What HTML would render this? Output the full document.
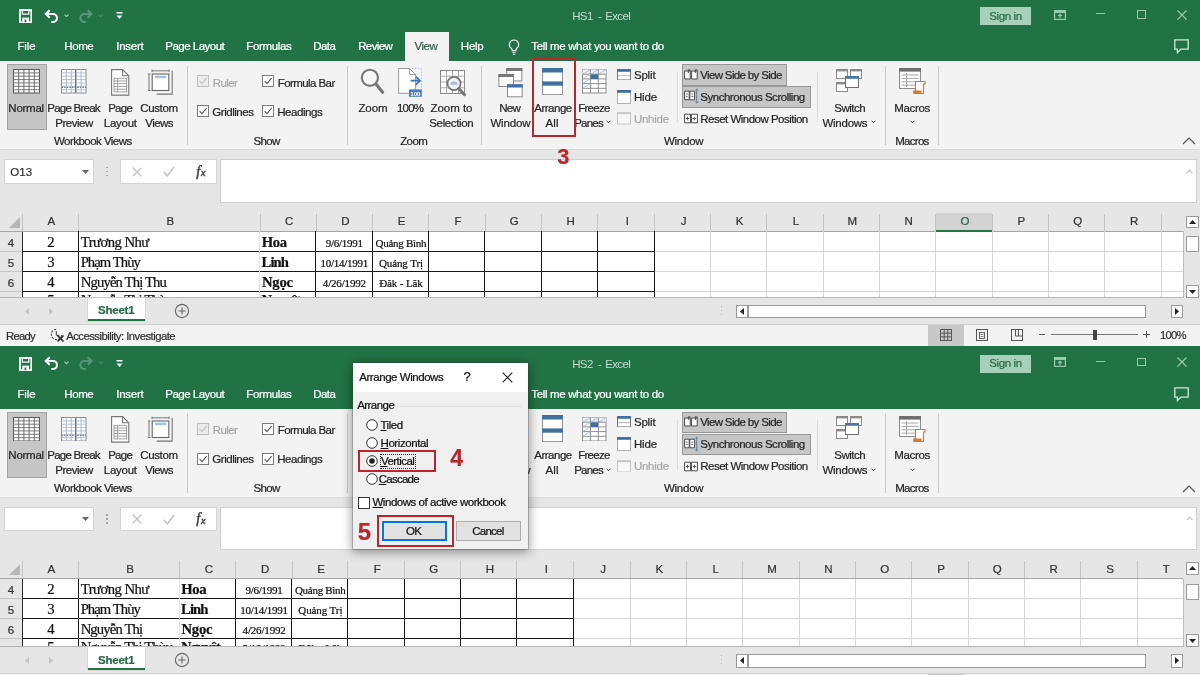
<!DOCTYPE html>
<html lang="en"><head><meta charset="utf-8"><title>Arrange Windows - Excel</title>
<style>
html,body{margin:0;padding:0;}
body{width:1200px;height:675px;overflow:hidden;position:relative;background:#e6e6e6;font-family:"Liberation Sans",sans-serif;}
.w{position:absolute;left:0;width:1200px;overflow:hidden;will-change:transform;}
.t{position:absolute;white-space:pre;-webkit-text-stroke:0.22px currentColor;}
.b{position:absolute;display:block;}
.d{position:absolute;left:0;top:0;width:1200px;height:675px;will-change:transform;}

</style></head>
<body>
<div class="w" style="top:0;height:345.5px;background:#e6e6e6"><div class="b" style="left:0px;top:0px;width:1200px;height:61px;background:#217346;"></div><svg class="b" style="left:19px;top:9px;" width="13.4" height="14.2" viewBox="0 0 13.4 14.2"><path d="M1 1h11.3v12.1h-11.3z" fill="none" stroke="#f4faf6" stroke-width="1.9"/><path d="M3.4 1.5v3.6h6.4v-3.6" fill="none" stroke="#f4faf6" stroke-width="1.3"/><rect x="3.2" y="8.6" width="6.9" height="5" fill="#f4faf6"/><rect x="5.6" y="10.6" width="1.7" height="2.6" fill="#217346"/></svg><svg class="b" style="left:44px;top:8.5px;" width="14.4" height="14.4" viewBox="0 0 14.4 14.4"><g><path d="M2 5H9a4 4 0 0 1 0 8H7.3" fill="none" stroke="#fff" stroke-width="2.1"/><path d="M5.7 1.2L1.8 5l3.9 3.8" fill="none" stroke="#fff" stroke-width="2.1" stroke-linejoin="miter"/></g></svg><svg class="b" style="left:63.7px;top:13.8px;" width="5" height="3.5" viewBox="0 0 5 3.5"><path d="M0.5 0.7L2.5 2.7L4.5 0.7" fill="none" stroke="#9cc7ae" stroke-width="1.2"/></svg><svg class="b" style="left:78.6px;top:8.5px;" width="14.4" height="14.4" viewBox="0 0 14.4 14.4"><g transform="translate(14.4,0) scale(-1,1)"><path d="M2 5H9a4 4 0 0 1 0 8H7.3" fill="none" stroke="#57987a" stroke-width="2.1"/><path d="M5.7 1.2L1.8 5l3.9 3.8" fill="none" stroke="#57987a" stroke-width="2.1" stroke-linejoin="miter"/></g></svg><svg class="b" style="left:97.7px;top:13.8px;" width="5" height="3.5" viewBox="0 0 5 3.5"><path d="M0.5 0.7L2.5 2.7L4.5 0.7" fill="none" stroke="#4c8f6d" stroke-width="1.2"/></svg><svg class="b" style="left:115.5px;top:12px;" width="7" height="8" viewBox="0 0 7 8"><rect x="0.5" y="0" width="6" height="1.5" fill="#fff"/><path d="M0.5 3.5h6L3.5 7z" fill="#fff"/></svg><span class="t" style='left:572.19px;top:8.40px;font-size:11.5px;line-height:16px;color:#c3dbcd;letter-spacing:-0.625px;-webkit-text-stroke:0;'>HS1</span><span class="t" style='left:598.00px;top:8.40px;font-size:11.5px;line-height:16px;color:#c3dbcd;-webkit-text-stroke:0;'>-</span><span class="t" style='left:605.19px;top:8.40px;font-size:11.5px;line-height:16px;color:#c3dbcd;letter-spacing:-0.625px;-webkit-text-stroke:0;'>Excel</span><div class="b" style="left:980px;top:7px;width:51px;height:18px;background:#a6d0b8;"></div><span class="t" style='left:989.31px;top:7.90px;font-size:11.5px;line-height:16px;color:#2a6a47;letter-spacing:-0.382px;'>Sign in</span><svg class="b" style="left:1053.5px;top:9.5px;" width="12" height="10" viewBox="0 0 12 10"><rect x="0.6" y="0.6" width="10.8" height="8.8" fill="none" stroke="#96caad" stroke-width="1.2"/><rect x="0.6" y="0.6" width="10.8" height="2.4" fill="#96caad"/><path d="M6 8.4V4.4M4.2 6L6 4.2L7.8 6" fill="none" stroke="#96caad" stroke-width="1.1"/></svg><div class="b" style="left:1096px;top:13.3px;width:9px;height:1.1999999999999993px;background:#96caad;"></div><div class="b" style="left:1137px;top:10px;width:8.5px;height:8.8px;border:1.2px solid #96caad;box-sizing:border-box;"></div><svg class="b" style="left:1177px;top:9.5px;" width="10" height="10" viewBox="0 0 10 10"><path d="M0.5 0.5l9 9M9.5 0.5l-9 9" stroke="#96caad" stroke-width="1.2"/></svg><span class="t" style='left:17.43px;top:38.40px;font-size:11.5px;line-height:16px;color:#fff;letter-spacing:-0.133px;'>File</span><span class="t" style='left:64.29px;top:38.40px;font-size:11.5px;line-height:16px;color:#fff;letter-spacing:-0.422px;'>Home</span><span class="t" style='left:116.35px;top:38.40px;font-size:11.5px;line-height:16px;color:#fff;letter-spacing:-0.294px;'>Insert</span><span class="t" style='left:165.25px;top:38.40px;font-size:11.5px;line-height:16px;color:#fff;letter-spacing:-0.509px;'>Page Layout</span><span class="t" style='left:246.32px;top:38.40px;font-size:11.5px;line-height:16px;color:#fff;letter-spacing:-0.367px;'>Formulas</span><span class="t" style='left:313.21px;top:38.40px;font-size:11.5px;line-height:16px;color:#fff;letter-spacing:-0.574px;'>Data</span><span class="t" style='left:358.19px;top:38.40px;font-size:11.5px;line-height:16px;color:#fff;letter-spacing:-0.620px;'>Review</span><div class="b" style="left:404.5px;top:32px;width:44.5px;height:29px;background:#f3f3f3;"></div><span class="t" style='left:414.55px;top:38.40px;font-size:11.5px;line-height:16px;color:#35604a;letter-spacing:-0.505px;'>View</span><span class="t" style='left:460.86px;top:38.40px;font-size:11.5px;line-height:16px;color:#fff;letter-spacing:-0.289px;'>Help</span><svg class="b" style="left:508px;top:39px;" width="12" height="17" viewBox="0 0 12 17"><path d="M6 1a4.6 4.6 0 0 1 2.6 8.4c-0.6 0.5-0.8 1.2-0.8 2.1h-3.6c0-0.9-0.2-1.6-0.8-2.1A4.6 4.6 0 0 1 6 1z" fill="none" stroke="#fff" stroke-width="1.2"/><path d="M4.3 13.3h3.4M4.8 15.3h2.4" stroke="#fff" stroke-width="1.1"/></svg><span class="t" style='left:531.33px;top:38.40px;font-size:11.5px;line-height:16px;color:#fff;letter-spacing:-0.349px;'>Tell me what you want to do</span><svg class="b" style="left:1174px;top:39px;" width="16" height="15" viewBox="0 0 16 15"><path d="M0.8 0.8h13.4v9.4h-7.4l-3.4 3.4v-3.4h-2.6z" fill="none" stroke="#cdebd9" stroke-width="1.3"/></svg><div class="b" style="left:0px;top:61px;width:1200px;height:88.5px;background:#f3f3f3;"></div><div class="b" style="left:0px;top:149px;width:1200px;height:1px;background:#dadada;"></div><div class="b" style="left:7px;top:64px;width:39.5px;height:66px;background:#c6c6c6;border:1px solid #a3a3a3;box-sizing:border-box;"></div><svg class="b" style="left:13px;top:69.2px;" width="27" height="24.5" viewBox="0 0 27 24.5"><rect x="0.5" y="0.5" width="26" height="23.5" fill="#fff" stroke="#5c5c5c" stroke-width="1.1"/><path d="M5.7 0.5v23.5" stroke="#6c6c6c" stroke-width="1"/><path d="M10.9 0.5v23.5" stroke="#6c6c6c" stroke-width="1"/><path d="M16.1 0.5v23.5" stroke="#6c6c6c" stroke-width="1"/><path d="M21.3 0.5v23.5" stroke="#6c6c6c" stroke-width="1"/><path d="M0.5 3.9h26" stroke="#6c6c6c" stroke-width="0.9"/><path d="M0.5 7.2h26" stroke="#6c6c6c" stroke-width="0.9"/><path d="M0.5 10.6h26" stroke="#6c6c6c" stroke-width="0.9"/><path d="M0.5 13.9h26" stroke="#6c6c6c" stroke-width="0.9"/><path d="M0.5 17.3h26" stroke="#6c6c6c" stroke-width="0.9"/><path d="M0.5 20.7h26" stroke="#6c6c6c" stroke-width="0.9"/></svg><svg class="b" style="left:61.3px;top:69.2px;" width="25.5" height="24.5" viewBox="0 0 25.5 24.5"><rect x="0.5" y="0.5" width="24.5" height="23.5" fill="#fff" stroke="#8a8a8a"/><path d="M5.4 0.5v23.5" stroke="#aebccd" stroke-width="1"/><path d="M10.3 0.5v23.5" stroke="#aebccd" stroke-width="1"/><path d="M15.2 0.5v23.5" stroke="#aebccd" stroke-width="1"/><path d="M20.1 0.5v23.5" stroke="#aebccd" stroke-width="1"/><path d="M0.5 3.9h24.5" stroke="#aebccd" stroke-width="0.9"/><path d="M0.5 7.2h24.5" stroke="#aebccd" stroke-width="0.9"/><path d="M0.5 10.6h24.5" stroke="#aebccd" stroke-width="0.9"/><path d="M0.5 13.9h24.5" stroke="#aebccd" stroke-width="0.9"/><path d="M0.5 17.3h24.5" stroke="#aebccd" stroke-width="0.9"/><path d="M0.5 20.7h24.5" stroke="#aebccd" stroke-width="0.9"/><path d="M14.6 0.5v23.5" stroke="#777" stroke-width="1.2"/><path d="M0.5 18.3h24.5" stroke="#666" stroke-width="1" stroke-dasharray="1.6 1"/></svg><svg class="b" style="left:111.2px;top:68.5px;" width="18.5" height="27" viewBox="0 0 18.5 27"><path d="M0.6 0.6h11l6.2 6.2v19.3h-17.2z" fill="#fff" stroke="#777" stroke-width="1.1"/><path d="M11.6 0.6v6.2h6.2" fill="none" stroke="#777" stroke-width="1.1"/><rect x="3" y="9.3" width="12.6" height="13.6" fill="#fff" stroke="#9a9a9a" stroke-width="0.9"/><path d="M3 12.0h12.6" stroke="#9a9a9a" stroke-width="0.9"/><path d="M3 14.7h12.6" stroke="#9a9a9a" stroke-width="0.9"/><path d="M3 17.5h12.6" stroke="#9a9a9a" stroke-width="0.9"/><path d="M3 20.2h12.6" stroke="#9a9a9a" stroke-width="0.9"/><path d="M6.6 9.3v13.6" stroke="#9a9a9a" stroke-width="0.9"/></svg><svg class="b" style="left:147.5px;top:68.5px;" width="26" height="27" viewBox="0 0 26 27"><path d="M4 1.8h17M4 0.5v2.6M21 0.5v2.6" stroke="#777" stroke-width="1" fill="none"/><path d="M1 5v16.5M-0.2 5h2.6M-0.2 21.5h2.6" stroke="#777" stroke-width="1" fill="none"/><path d="M24.2 1.8v23.3h-15.5" stroke="#777" stroke-width="1.1" fill="none"/><rect x="4.2" y="5" width="16.6" height="16.5" fill="#fff" stroke="#666" stroke-width="1.1"/><rect x="7" y="6.6" width="11.2" height="2.6" fill="#a9c0e0"/></svg><span class="t" style='left:8.37px;top:99.50px;font-size:11.5px;line-height:16px;color:#262626;letter-spacing:-0.260px;'>Normal</span><span class="t" style='left:47.27px;top:99.50px;font-size:11.5px;line-height:16px;color:#262626;letter-spacing:-0.750px;'>Page Break</span><span class="t" style='left:55.26px;top:114.70px;font-size:11.5px;line-height:16px;color:#262626;letter-spacing:-0.487px;'>Preview</span><span class="t" style='left:108.14px;top:99.50px;font-size:11.5px;line-height:16px;color:#262626;letter-spacing:-0.715px;'>Page</span><span class="t" style='left:103.86px;top:114.70px;font-size:11.5px;line-height:16px;color:#262626;letter-spacing:-0.289px;'>Layout</span><span class="t" style='left:140.31px;top:99.50px;font-size:11.5px;line-height:16px;color:#262626;letter-spacing:-0.387px;'>Custom</span><span class="t" style='left:145.23px;top:114.70px;font-size:11.5px;line-height:16px;color:#262626;letter-spacing:-0.534px;'>Views</span><span class="t" style='left:53.93px;top:132.70px;font-size:11.5px;line-height:16px;color:#262626;letter-spacing:-0.531px;'>Workbook Views</span><div class="b" style="left:186.5px;top:66px;width:1.0px;height:79px;background:#c8c8c8;"></div><svg class="b" style="left:197px;top:75.4px;" width="12" height="12" viewBox="0 0 12 12"><rect x="0.5" y="0.5" width="11" height="11" fill="#ececec" stroke="#bdbdbd"/><path d="M2.6 6.2l2.4 2.5l4.6-5.6" fill="none" stroke="#c2c2c2" stroke-width="1.1"/></svg><span class="t" style='left:212.70px;top:74.90px;font-size:11.5px;line-height:16px;color:#a8a8a8;letter-spacing:-0.597px;'>Ruler</span><svg class="b" style="left:197px;top:105px;" width="12" height="12" viewBox="0 0 12 12"><rect x="0.5" y="0.5" width="11" height="11" fill="#fff" stroke="#7d7d7d"/><path d="M2.6 6.2l2.4 2.5l4.6-5.6" fill="none" stroke="#5a5a5a" stroke-width="1.1"/></svg><span class="t" style='left:212.27px;top:103.70px;font-size:11.5px;line-height:16px;color:#262626;letter-spacing:-0.455px;'>Gridlines</span><svg class="b" style="left:262px;top:75.4px;" width="12" height="12" viewBox="0 0 12 12"><rect x="0.5" y="0.5" width="11" height="11" fill="#fff" stroke="#7d7d7d"/><path d="M2.6 6.2l2.4 2.5l4.6-5.6" fill="none" stroke="#5a5a5a" stroke-width="1.1"/></svg><span class="t" style='left:277.71px;top:74.90px;font-size:11.5px;line-height:16px;color:#262626;letter-spacing:-0.571px;'>Formula Bar</span><svg class="b" style="left:262px;top:105px;" width="12" height="12" viewBox="0 0 12 12"><rect x="0.5" y="0.5" width="11" height="11" fill="#fff" stroke="#7d7d7d"/><path d="M2.6 6.2l2.4 2.5l4.6-5.6" fill="none" stroke="#5a5a5a" stroke-width="1.1"/></svg><span class="t" style='left:277.28px;top:103.70px;font-size:11.5px;line-height:16px;color:#262626;letter-spacing:-0.449px;'>Headings</span><span class="t" style='left:253.58px;top:132.70px;font-size:11.5px;line-height:16px;color:#262626;letter-spacing:-0.645px;'>Show</span><div class="b" style="left:346.7px;top:66px;width:1.0px;height:79px;background:#c8c8c8;"></div><svg class="b" style="left:360px;top:68px;" width="26" height="27" viewBox="0 0 26 27"><circle cx="9.9" cy="9.8" r="8.1" fill="#f6f6f6" stroke="#777" stroke-width="2.1"/><path d="M16 16l6.6 8.2" stroke="#777" stroke-width="3.2" stroke-linecap="round"/></svg><span class="t" style='left:358.45px;top:99.70px;font-size:11.5px;line-height:16px;color:#262626;letter-spacing:-0.102px;'>Zoom</span><svg class="b" style="left:398px;top:68px;" width="25" height="29" viewBox="0 0 25 29"><path d="M0.6 0.5h11l6 6v18.8h-17z" fill="#fff" stroke="#9a9a9a"/><path d="M11.6 0.5v6h6" fill="none" stroke="#9a9a9a"/><path d="M23.4 0.5v20" stroke="#b9c6d8" stroke-width="1.1" stroke-dasharray="1.5 1.5"/><path d="M14 0.5h9" stroke="#b9c6d8" stroke-width="1" stroke-dasharray="1.5 1.5"/><path d="M12.6 12.7h9.4M17.8 8.6l4.2 4.1l-4.2 4.1" fill="none" stroke="#3f74b5" stroke-width="1.7"/><rect x="11" y="21.4" width="12.8" height="7.4" fill="#4a7dbd"/><text x="17.4" y="27.6" font-size="6.2" font-family="Liberation Sans, sans-serif" font-weight="700" fill="#fff" text-anchor="middle">100</text></svg><span class="t" style='left:396.91px;top:99.70px;font-size:11.5px;line-height:16px;color:#262626;letter-spacing:-0.750px;'>100%</span><svg class="b" style="left:439.5px;top:69.5px;" width="28" height="27" viewBox="0 0 28 27"><rect x="0.5" y="0.5" width="24" height="23" fill="#fff" stroke="#8a8a8a"/><path d="M6.5 0.5v23" stroke="#a8a8a8"/><path d="M12.5 0.5v23" stroke="#a8a8a8"/><path d="M18.5 0.5v23" stroke="#a8a8a8"/><path d="M0.5 6.2h24" stroke="#a8a8a8"/><path d="M0.5 12.0h24" stroke="#a8a8a8"/><path d="M0.5 17.8h24" stroke="#a8a8a8"/><circle cx="14" cy="13.5" r="6.6" fill="#eef2f6" stroke="#777" stroke-width="1.8"/><path d="M10.3 14.8a3.7 3.4 0 0 1 7.4 0z" fill="#a9b9c9"/><path d="M19 18.7l5.6 6" stroke="#777" stroke-width="3" stroke-linecap="round"/></svg><span class="t" style='left:430.49px;top:99.70px;font-size:11.5px;line-height:16px;color:#262626;letter-spacing:-0.027px;'>Zoom to</span><span class="t" style='left:429.32px;top:114.70px;font-size:11.5px;line-height:16px;color:#262626;letter-spacing:-0.368px;'>Selection</span><span class="t" style='left:400.20px;top:132.70px;font-size:11.5px;line-height:16px;color:#262626;letter-spacing:-0.602px;'>Zoom</span><div class="b" style="left:481.2px;top:66px;width:1.0px;height:79px;background:#c8c8c8;"></div><svg class="b" style="left:498px;top:67.5px;" width="25" height="30" viewBox="0 0 25 30"><rect x="8.8" y="0.5" width="15" height="12.4" fill="#fff" stroke="#8a8a8a"/><rect x="8.3" y="0" width="16" height="3" fill="#777"/><rect x="0.9" y="6.5" width="14.6" height="12" fill="#fff" stroke="#8a8a8a"/><rect x="0.4" y="6" width="15.6" height="3" fill="#777"/><rect x="9.5" y="16.8" width="14.7" height="12" fill="#fff" stroke="#8a8a8a"/><rect x="9" y="16.3" width="15.7" height="3.2" fill="#3f6fa8"/></svg><span class="t" style='left:499.16px;top:99.70px;font-size:11.5px;line-height:16px;color:#262626;letter-spacing:-0.672px;'>New</span><span class="t" style='left:490.42px;top:114.70px;font-size:11.5px;line-height:16px;color:#262626;letter-spacing:-0.151px;'>Window</span><svg class="b" style="left:542px;top:67.6px;" width="21.2" height="27.2" viewBox="0 0 21.2 27.2"><rect x="0.6" y="0.5" width="20" height="26.2" fill="#fff" stroke="#8a8a8a"/><rect x="0.1" y="0" width="21" height="4.5" fill="#41709f"/><rect x="0.1" y="13.4" width="21" height="4.3" fill="#41709f"/></svg><span class="t" style='left:534.26px;top:99.70px;font-size:11.5px;line-height:16px;color:#262626;letter-spacing:-0.489px;'>Arrange</span><span class="t" style='left:545.54px;top:114.70px;font-size:11.5px;line-height:16px;color:#262626;letter-spacing:0.073px;'>All</span><svg class="b" style="left:582px;top:69.4px;" width="24.5" height="24.5" viewBox="0 0 24.5 24.5"><rect x="0.5" y="0.5" width="23.5" height="23.5" fill="#fff" stroke="#8a8a8a"/><path d="M0.5 5.6h8M0.5 5.6v-5h23.5v5" fill="#eef2f7" stroke="none"/><path d="M8.4 0.5v23.5" stroke="#8f8f8f"/><path d="M16.3 0.5v23.5" stroke="#8f8f8f"/><path d="M0.5 5.2h23.5" stroke="#8f8f8f"/><path d="M0.5 9.9h23.5" stroke="#8f8f8f"/><path d="M0.5 14.6h23.5" stroke="#8f8f8f"/><path d="M0.5 19.3h23.5" stroke="#8f8f8f"/><rect x="8.6" y="5.4" width="7.4" height="4.6" fill="#41709f"/><path d="M0.8 5l7.4-4.2M0.8 9.7l7.4-4.3M0.8 14.4l7.4-4.3M0.8 19.1l7.4-4.3M8.8 5l7-4.2M16.8 5l7-4.2" stroke="#a9bdd6" stroke-width="0.9"/></svg><span class="t" style='left:578.28px;top:99.70px;font-size:11.5px;line-height:16px;color:#262626;letter-spacing:-0.750px;'>Freeze</span><span class="t" style='left:574.15px;top:114.70px;font-size:11.5px;line-height:16px;color:#262626;letter-spacing:-0.750px;'>Panes</span><svg class="b" style="left:606.3px;top:120.2px;" width="5" height="3.5" viewBox="0 0 5 3.5"><path d="M0.5 0.7L2.5 2.7L4.5 0.7" fill="none" stroke="#444" stroke-width="1"/></svg><svg class="b" style="left:617.2px;top:68.5px;" width="14" height="11.4" viewBox="0 0 14 11.4"><rect x="0.5" y="0.5" width="13" height="10.4" fill="#fff" stroke="#777"/><rect x="0" y="0" width="14" height="2.8" fill="#41709f"/><path d="M1.5 6.7h11" stroke="#666" stroke-dasharray="1 1"/></svg><span class="t" style='left:633.91px;top:66.70px;font-size:11.5px;line-height:16px;color:#262626;letter-spacing:-0.175px;'>Split</span><svg class="b" style="left:617.2px;top:89.5px;" width="14" height="14" viewBox="0 0 14 14"><rect x="0.5" y="0.5" width="13" height="13" fill="#fff" stroke="#666" stroke-dasharray="1 1"/><rect x="0" y="0" width="14" height="2.8" fill="#41709f"/></svg><span class="t" style='left:633.92px;top:88.70px;font-size:11.5px;line-height:16px;color:#262626;letter-spacing:-0.164px;'>Hide</span><svg class="b" style="left:617.2px;top:112px;" width="14" height="12.5" viewBox="0 0 14 12.5"><rect x="0.5" y="0.5" width="13" height="11.5" fill="#f7f7f7" stroke="#c4c4c4"/><rect x="0" y="0" width="14" height="2.2" fill="#c9c9c9"/></svg><span class="t" style='left:633.88px;top:110.70px;font-size:11.5px;line-height:16px;color:#a8a8a8;letter-spacing:-0.242px;'>Unhide</span><div class="b" style="left:677px;top:72px;width:1px;height:50px;background:#dcdcdc;"></div><div class="b" style="left:682px;top:64.2px;width:105.20000000000005px;height:21.599999999999994px;background:#c6c6c6;border:1px solid #989898;box-sizing:border-box;"></div><div class="b" style="left:682px;top:86.2px;width:128.79999999999995px;height:21.599999999999994px;background:#c6c6c6;border:1px solid #989898;box-sizing:border-box;"></div><svg class="b" style="left:684.4px;top:68.6px;" width="16" height="16" viewBox="0 0 16 16"><path d="M0.6 2h5.6v8h-5.6zM7.6 2h5.6v8h-5.6z" fill="#fff" stroke="#4a4a4a" stroke-width="1"/><path d="M4.3 0.6v3.4M11.3 0.6v3.4" stroke="#4a4a4a" stroke-width="1"/><path d="M4.3 0.9h1.9v1.1M11.3 0.9h1.9v1.1" fill="none" stroke="#4a4a4a" stroke-width="0.9"/></svg><span class="t" style='left:700.18px;top:66.70px;font-size:11.5px;line-height:16px;color:#262626;letter-spacing:-0.646px;'>View Side by Side</span><svg class="b" style="left:684.4px;top:88px;" width="16" height="16" viewBox="0 0 16 16"><path d="M0.6 3.2h4.6v8.6h-4.6zM5.8 3.2h4.8v8.6h-4.8z" fill="#fff" stroke="#4a4a4a" stroke-width="1"/><path d="M1.8 6h2M1.8 8.4h2M7.3 6h2M7.3 8.4h2" stroke="#4a4a4a" stroke-width="0.8"/><path d="M12.7 1v14" stroke="#5b7fa8" stroke-width="1"/><path d="M11.3 2.6l1.4-1.8l1.4 1.8M11.3 13.4l1.4 1.8l1.4-1.8" fill="none" stroke="#5b7fa8" stroke-width="0.9"/></svg><span class="t" style='left:700.26px;top:88.70px;font-size:11.5px;line-height:16px;color:#262626;letter-spacing:-0.472px;'>Synchronous Scrolling</span><svg class="b" style="left:684.4px;top:113.2px;" width="16" height="16" viewBox="0 0 16 16"><path d="M0.6 1.2h6v8.6h-6zM7.4 1.2h6v8.6h-6z" fill="#fff" stroke="#4a4a4a" stroke-width="1"/><path d="M1.8 5.5h3.6M8.6 5.5h3.6M3.6 3.7v3.6M10.4 3.7v3.6" fill="none" stroke="#4a4a4a" stroke-width="0.9"/></svg><span class="t" style='left:700.24px;top:110.70px;font-size:11.5px;line-height:16px;color:#262626;letter-spacing:-0.512px;'>Reset Window Position</span><div class="b" style="left:817px;top:72px;width:1px;height:50px;background:#dcdcdc;"></div><svg class="b" style="left:836px;top:68.5px;" width="27" height="24" viewBox="0 0 27 24"><rect x="0.5" y="0.5" width="11" height="9" fill="#fff" stroke="#8a8a8a"/><rect x="0" y="0" width="12" height="2.4" fill="#8a8a8a"/><rect x="14.5" y="0.5" width="11" height="9" fill="#fff" stroke="#8a8a8a"/><rect x="14" y="0" width="12" height="2.4" fill="#8a8a8a"/><rect x="0.5" y="13.5" width="11" height="9" fill="#fff" stroke="#8a8a8a"/><rect x="0" y="13" width="12" height="2.4" fill="#8a8a8a"/><rect x="9.5" y="7.5" width="13" height="11" fill="#fff" stroke="#6f6f6f"/><rect x="9" y="7" width="14" height="2.8" fill="#4a77a8"/></svg><span class="t" style='left:834.26px;top:99.70px;font-size:11.5px;line-height:16px;color:#262626;letter-spacing:-0.479px;'>Switch</span><span class="t" style='left:822.38px;top:114.70px;font-size:11.5px;line-height:16px;color:#262626;letter-spacing:-0.237px;'>Windows</span><svg class="b" style="left:870.5px;top:120.4px;" width="5" height="3.5" viewBox="0 0 5 3.5"><path d="M0.5 0.7L2.5 2.7L4.5 0.7" fill="none" stroke="#444" stroke-width="1"/></svg><span class="t" style='left:663.88px;top:132.70px;font-size:11.5px;line-height:16px;color:#262626;letter-spacing:-0.234px;'>Window</span><div class="b" style="left:885.3px;top:66px;width:1.0px;height:79px;background:#c8c8c8;"></div><svg class="b" style="left:899px;top:68px;" width="28" height="27" viewBox="0 0 28 27"><rect x="0.5" y="0.5" width="21" height="20" fill="#fff" stroke="#8a8a8a"/><rect x="0" y="0" width="22" height="3.6" fill="#6f6f6f"/><path d="M2.5 7.0h17" stroke="#a8a8a8"/><path d="M2.5 10.4h17" stroke="#a8a8a8"/><path d="M2.5 13.8h17" stroke="#a8a8a8"/><path d="M2.5 17.2h17" stroke="#a8a8a8"/><path d="M7.5 5v14" stroke="#a8a8a8"/><path d="M16.5 13.5h9.5v2.5h-1.5v9.5h-9.5v-2.5h1.5z" fill="#fff" stroke="#d9772b" stroke-width="1.2"/><rect x="14.5" y="22.5" width="8" height="3" fill="#d9772b"/></svg><span class="t" style='left:894.32px;top:99.70px;font-size:11.5px;line-height:16px;color:#262626;letter-spacing:-0.367px;'>Macros</span><svg class="b" style="left:909.8px;top:120.4px;" width="5" height="3.5" viewBox="0 0 5 3.5"><path d="M0.5 0.7L2.5 2.7L4.5 0.7" fill="none" stroke="#444" stroke-width="1"/></svg><span class="t" style='left:895.15px;top:132.70px;font-size:11.5px;line-height:16px;color:#262626;letter-spacing:-0.701px;'>Macros</span><div class="b" style="left:938px;top:66px;width:1px;height:79px;background:#c8c8c8;"></div><svg class="b" style="left:1181.5px;top:137px;" width="14" height="8" viewBox="0 0 14 8"><path d="M1 7L7 1L13 7" fill="none" stroke="#555" stroke-width="1.2"/></svg><div class="b" style="left:532px;top:58.4px;width:44.200000000000045px;height:78.4px;border:2.3px solid #b9272d;box-sizing:border-box;"></div><div class="b" style="left:4.2px;top:159px;width:89.6px;height:24.599999999999994px;background:#fff;border:1px solid #d4d4d4;box-sizing:border-box;"></div><span class="t" style='left:10.16px;top:163.70px;font-size:11.5px;line-height:16px;color:#333;letter-spacing:0.117px;'>O13</span><svg class="b" style="left:81.5px;top:169.5px;" width="7" height="4" viewBox="0 0 7 4"><path d="M0 0h7L3.5 4z" fill="#666"/></svg><div class="b" style="left:106.4px;top:166.9px;width:1.5999999999999943px;height:1.5999999999999943px;background:#a6a6a6;"></div><div class="b" style="left:106.4px;top:170.8px;width:1.5999999999999943px;height:1.5999999999999943px;background:#a6a6a6;"></div><div class="b" style="left:106.4px;top:174.70000000000002px;width:1.5999999999999943px;height:1.5999999999999943px;background:#a6a6a6;"></div><div class="b" style="left:120.2px;top:159px;width:96.39999999999999px;height:24.599999999999994px;background:#fff;border:1px solid #d4d4d4;box-sizing:border-box;"></div><svg class="b" style="left:132px;top:166.5px;" width="10" height="10" viewBox="0 0 10 10"><path d="M0.8 0.8l8.4 8.4M9.2 0.8l-8.4 8.4" stroke="#c2c2c2" stroke-width="1.4"/></svg><svg class="b" style="left:163px;top:166px;" width="12" height="11" viewBox="0 0 12 11"><path d="M0.8 6l3.6 3.8L11.2 0.8" fill="none" stroke="#c2c2c2" stroke-width="1.5"/></svg><span class="t" style='left:196.20px;top:160.90px;font-size:14.5px;line-height:20px;color:#3f3f3f;font-family:"Liberation Serif", serif;font-style:italic;-webkit-text-stroke:0.45px currentColor;'>f</span><span class="t" style='left:201.00px;top:166.10px;font-size:10px;line-height:14px;color:#3f3f3f;font-family:"Liberation Serif", serif;font-style:italic;-webkit-text-stroke:0.45px currentColor;'>x</span><div class="b" style="left:220.4px;top:159px;width:976.6px;height:43.599999999999994px;background:#fff;border:1px solid #d0d0d0;box-sizing:border-box;"></div><svg class="b" style="left:1185.5px;top:168.5px;" width="7" height="5" viewBox="0 0 7 5"><path d="M0.5 4.2L3.5 1L6.5 4.2" fill="none" stroke="#c2c2c2" stroke-width="1.1"/></svg><div class="b" style="left:0;top:0;width:1183.5px;height:297.5px;overflow:hidden"><div class="b" style="left:22px;top:231px;width:1161px;height:66.5px;background:#fff;"></div><svg class="b" style="left:8.8px;top:216.8px;" width="11" height="11" viewBox="0 0 11 11"><path d="M11 0v11h-11z" fill="#b7b7b7"/></svg><span class="t" style='left:47.61px;top:213.30px;font-size:11.5px;line-height:16px;color:#333;'>A</span><span class="t" style='left:166.61px;top:213.30px;font-size:11.5px;line-height:16px;color:#333;'>B</span><span class="t" style='left:285.04px;top:213.30px;font-size:11.5px;line-height:16px;color:#333;'>C</span><span class="t" style='left:341.19px;top:213.30px;font-size:11.5px;line-height:16px;color:#333;'>D</span><span class="t" style='left:397.86px;top:213.30px;font-size:11.5px;line-height:16px;color:#333;'>E</span><span class="t" style='left:454.53px;top:213.30px;font-size:11.5px;line-height:16px;color:#333;'>F</span><span class="t" style='left:509.87px;top:213.30px;font-size:11.5px;line-height:16px;color:#333;'>G</span><span class="t" style='left:566.54px;top:213.30px;font-size:11.5px;line-height:16px;color:#333;'>H</span><span class="t" style='left:625.75px;top:213.30px;font-size:11.5px;line-height:16px;color:#333;'>I</span><span class="t" style='left:680.78px;top:213.30px;font-size:11.5px;line-height:16px;color:#333;'>J</span><span class="t" style='left:735.86px;top:213.30px;font-size:11.5px;line-height:16px;color:#333;'>K</span><span class="t" style='left:792.85px;top:213.30px;font-size:11.5px;line-height:16px;color:#333;'>L</span><span class="t" style='left:847.55px;top:213.30px;font-size:11.5px;line-height:16px;color:#333;'>M</span><span class="t" style='left:904.54px;top:213.30px;font-size:11.5px;line-height:16px;color:#333;'>N</span><div class="b" style="left:935.7px;top:212.5px;width:56.299999999999955px;height:18.5px;background:#d3d3d3;"></div><div class="b" style="left:935.7px;top:229.5px;width:56.299999999999955px;height:2.0px;background:#217346;"></div><span class="t" style='left:960.57px;top:213.30px;font-size:11.5px;line-height:16px;color:#35604a;'>O</span><span class="t" style='left:1017.51px;top:213.30px;font-size:11.5px;line-height:16px;color:#333;'>P</span><span class="t" style='left:1073.22px;top:213.30px;font-size:11.5px;line-height:16px;color:#333;'>Q</span><span class="t" style='left:1129.89px;top:213.30px;font-size:11.5px;line-height:16px;color:#333;'>R</span><span class="t" style='left:1186.51px;top:213.30px;font-size:11.5px;line-height:16px;color:#333;'>S</span><div class="b" style="left:21.5px;top:213.5px;width:1.0px;height:17.5px;background:#c4c4c4;"></div><div class="b" style="left:78.0px;top:213.5px;width:1.0px;height:17.5px;background:#c4c4c4;"></div><div class="b" style="left:259.5px;top:213.5px;width:1.0px;height:17.5px;background:#c4c4c4;"></div><div class="b" style="left:315.5px;top:213.5px;width:1.0px;height:17.5px;background:#c4c4c4;"></div><div class="b" style="left:371.8px;top:213.5px;width:1.0px;height:17.5px;background:#c4c4c4;"></div><div class="b" style="left:428.2px;top:213.5px;width:1.0px;height:17.5px;background:#c4c4c4;"></div><div class="b" style="left:484.5px;top:213.5px;width:1.0px;height:17.5px;background:#c4c4c4;"></div><div class="b" style="left:540.8px;top:213.5px;width:1.0px;height:17.5px;background:#c4c4c4;"></div><div class="b" style="left:597.2px;top:213.5px;width:1.0px;height:17.5px;background:#c4c4c4;"></div><div class="b" style="left:654.1px;top:213.5px;width:1.0px;height:17.5px;background:#c4c4c4;"></div><div class="b" style="left:709.8px;top:213.5px;width:1.0px;height:17.5px;background:#c4c4c4;"></div><div class="b" style="left:766.2px;top:213.5px;width:1.0px;height:17.5px;background:#c4c4c4;"></div><div class="b" style="left:822.5px;top:213.5px;width:1.0px;height:17.5px;background:#c4c4c4;"></div><div class="b" style="left:878.8px;top:213.5px;width:1.0px;height:17.5px;background:#c4c4c4;"></div><div class="b" style="left:935.2px;top:213.5px;width:1.0px;height:17.5px;background:#c4c4c4;"></div><div class="b" style="left:991.5px;top:213.5px;width:1.0px;height:17.5px;background:#c4c4c4;"></div><div class="b" style="left:1047.8px;top:213.5px;width:1.0px;height:17.5px;background:#c4c4c4;"></div><div class="b" style="left:1104.2px;top:213.5px;width:1.0px;height:17.5px;background:#c4c4c4;"></div><div class="b" style="left:1160.5px;top:213.5px;width:1.0px;height:17.5px;background:#c4c4c4;"></div><div class="b" style="left:1216.8px;top:213.5px;width:1.0px;height:17.5px;background:#c4c4c4;"></div><div class="b" style="left:0px;top:230.5px;width:1183px;height:1.0px;background:#a6a6a6;z-index:0;"></div><div class="b" style="left:935.7px;top:229.5px;width:56.299999999999955px;height:2.1999999999999886px;background:#217346;"></div><div class="b" style="left:654.6px;top:250.5px;width:528.4px;height:1.0px;background:#d6d6d6;"></div><div class="b" style="left:654.6px;top:270.5px;width:528.4px;height:1.0px;background:#d6d6d6;"></div><div class="b" style="left:654.6px;top:290.5px;width:528.4px;height:1.0px;background:#d6d6d6;"></div><div class="b" style="left:709.8px;top:231px;width:1.0px;height:66.5px;background:#d6d6d6;"></div><div class="b" style="left:766.2px;top:231px;width:1.0px;height:66.5px;background:#d6d6d6;"></div><div class="b" style="left:822.5px;top:231px;width:1.0px;height:66.5px;background:#d6d6d6;"></div><div class="b" style="left:878.8px;top:231px;width:1.0px;height:66.5px;background:#d6d6d6;"></div><div class="b" style="left:935.2px;top:231px;width:1.0px;height:66.5px;background:#d6d6d6;"></div><div class="b" style="left:991.5px;top:231px;width:1.0px;height:66.5px;background:#d6d6d6;"></div><div class="b" style="left:1047.8px;top:231px;width:1.0px;height:66.5px;background:#d6d6d6;"></div><div class="b" style="left:1104.2px;top:231px;width:1.0px;height:66.5px;background:#d6d6d6;"></div><div class="b" style="left:1160.5px;top:231px;width:1.0px;height:66.5px;background:#d6d6d6;"></div><div class="b" style="left:1216.8px;top:231px;width:1.0px;height:66.5px;background:#d6d6d6;"></div><div class="b" style="left:0px;top:250.5px;width:22px;height:1.0px;background:#c4c4c4;"></div><div class="b" style="left:0px;top:270.5px;width:22px;height:1.0px;background:#c4c4c4;"></div><div class="b" style="left:0px;top:290.5px;width:22px;height:1.0px;background:#c4c4c4;"></div><div class="b" style="left:21.8px;top:231.5px;width:1.0999999999999979px;height:66.0px;background:#2a2a2a;"></div><div class="b" style="left:22px;top:250.9px;width:632.6px;height:1.0999999999999943px;background:#161616;"></div><div class="b" style="left:22px;top:270.9px;width:632.6px;height:1.1000000000000227px;background:#161616;"></div><div class="b" style="left:22px;top:290.9px;width:632.6px;height:1.1000000000000227px;background:#161616;"></div><div class="b" style="left:78px;top:231px;width:1.0999999999999943px;height:66.5px;background:#161616;"></div><div class="b" style="left:259px;top:231px;width:1px;height:66.5px;background:#e4e4e4;"></div><div class="b" style="left:315px;top:231px;width:1.1000000000000227px;height:66.5px;background:#161616;"></div><div class="b" style="left:372px;top:231px;width:1.1000000000000227px;height:66.5px;background:#161616;"></div><div class="b" style="left:428px;top:231px;width:1.1000000000000227px;height:66.5px;background:#161616;"></div><div class="b" style="left:484px;top:231px;width:1.1000000000000227px;height:66.5px;background:#161616;"></div><div class="b" style="left:541px;top:231px;width:1.1000000000000227px;height:66.5px;background:#161616;"></div><div class="b" style="left:597px;top:231px;width:1.1000000000000227px;height:66.5px;background:#161616;"></div><div class="b" style="left:654px;top:231px;width:1.1000000000000227px;height:66.5px;background:#161616;"></div><div class="b" style="left:1182.5px;top:231px;width:1.0px;height:66.5px;background:#bdbdbd;"></div><span class="t" style='left:7.75px;top:234.70px;font-size:11.5px;line-height:16px;color:#333;letter-spacing:-0.106px;'>4</span><span class="t" style='left:7.75px;top:254.75px;font-size:11.5px;line-height:16px;color:#333;letter-spacing:-0.106px;'>5</span><span class="t" style='left:7.75px;top:274.80px;font-size:11.5px;line-height:16px;color:#333;letter-spacing:-0.106px;'>6</span><span class="t" style='left:47.34px;top:231.75px;font-size:14.67px;line-height:21px;color:#111;font-family:"Liberation Serif", serif;'>2</span><span class="t" style='left:80.83px;top:231.75px;font-size:14.67px;line-height:21px;color:#111;font-family:"Liberation Serif", serif;letter-spacing:-0.540px;'>Trương Như</span><span class="t" style='left:261.82px;top:231.75px;font-size:14.67px;line-height:21px;color:#111;font-weight:700;font-family:"Liberation Serif", serif;letter-spacing:-0.354px;'>Hoa</span><span class="t" style='left:325.82px;top:235.99px;font-size:11px;line-height:15px;color:#111;font-family:"Liberation Serif", serif;letter-spacing:-0.266px;'>9/6/1991</span><span class="t" style='left:375.56px;top:235.99px;font-size:11px;line-height:15px;color:#111;font-family:"Liberation Serif", serif;letter-spacing:-0.288px;'>Quảng Bình</span><span class="t" style='left:47.34px;top:251.75px;font-size:14.67px;line-height:21px;color:#111;font-family:"Liberation Serif", serif;'>3</span><span class="t" style='left:80.64px;top:251.75px;font-size:14.67px;line-height:21px;color:#111;font-family:"Liberation Serif", serif;letter-spacing:-0.926px;'>Phạm Thùy</span><span class="t" style='left:261.54px;top:251.75px;font-size:14.67px;line-height:21px;color:#111;font-weight:700;font-family:"Liberation Serif", serif;letter-spacing:-0.914px;'>Linh</span><span class="t" style='left:320.57px;top:255.99px;font-size:11px;line-height:15px;color:#111;font-family:"Liberation Serif", serif;letter-spacing:-0.263px;'>10/14/1991</span><span class="t" style='left:378.95px;top:255.99px;font-size:11px;line-height:15px;color:#111;font-family:"Liberation Serif", serif;letter-spacing:-0.104px;'>Quảng Trị</span><span class="t" style='left:47.34px;top:271.75px;font-size:14.67px;line-height:21px;color:#111;font-family:"Liberation Serif", serif;'>4</span><span class="t" style='left:80.68px;top:271.75px;font-size:14.67px;line-height:21px;color:#111;font-family:"Liberation Serif", serif;letter-spacing:-0.841px;'>Nguyễn Thị Thu</span><span class="t" style='left:261.91px;top:271.75px;font-size:14.67px;line-height:21px;color:#111;font-weight:700;font-family:"Liberation Serif", serif;letter-spacing:-0.188px;'>Ngọc</span><span class="t" style='left:322.86px;top:275.99px;font-size:11px;line-height:15px;color:#111;font-family:"Liberation Serif", serif;letter-spacing:-0.181px;'>4/26/1992</span><span class="t" style='left:379.19px;top:275.99px;font-size:11px;line-height:15px;color:#111;font-family:"Liberation Serif", serif;letter-spacing:-0.122px;'>Đăk - Lăk</span><span class="t" style='left:47.34px;top:290.35px;font-size:14.67px;line-height:21px;color:#111;font-family:"Liberation Serif", serif;'>5</span><span class="t" style='left:80.65px;top:290.35px;font-size:14.67px;line-height:21px;color:#111;font-family:"Liberation Serif", serif;letter-spacing:-0.900px;'>Nguyễn Thị Thùy</span><span class="t" style='left:261.52px;top:290.35px;font-size:14.67px;line-height:21px;color:#111;font-weight:700;font-family:"Liberation Serif", serif;letter-spacing:-0.964px;'>Nguyệt</span><span class="t" style='left:322.86px;top:294.59px;font-size:11px;line-height:15px;color:#111;font-family:"Liberation Serif", serif;letter-spacing:-0.181px;'>5/19/1992</span><span class="t" style='left:378.95px;top:294.59px;font-size:11px;line-height:15px;color:#111;font-family:"Liberation Serif", serif;letter-spacing:-0.104px;'>Quảng Trị</span></div><div class="b" style="left:1183.5px;top:212px;width:16.5px;height:86px;background:#e6e6e6;"></div><div class="b" style="left:1186px;top:215.5px;width:12.700000000000045px;height:12.5px;background:#fff;border:1px solid #9b9b9b;box-sizing:border-box;"></div><svg class="b" style="left:1189px;top:219.5px;" width="7" height="4" viewBox="0 0 7 4"><path d="M0 4h7L3.5 0z" fill="#222"/></svg><div class="b" style="left:1186px;top:236.0px;width:12.700000000000045px;height:15.5px;background:#fff;border:1px solid #9b9b9b;box-sizing:border-box;"></div><div class="b" style="left:1186px;top:285.0px;width:12.700000000000045px;height:12.800000000000011px;background:#fff;border:1px solid #9b9b9b;box-sizing:border-box;"></div><svg class="b" style="left:1189px;top:289.5px;" width="7" height="4" viewBox="0 0 7 4"><path d="M0 0h7L3.5 4z" fill="#222"/></svg><div class="b" style="left:0;top:0px;width:1200px;height:0"><div class="b" style="left:0px;top:297.5px;width:1200px;height:26.5px;background:#e6e6e6;"></div><div class="b" style="left:0px;top:297px;width:1183.5px;height:1px;background:#b5b5b5;"></div><svg class="b" style="left:24.5px;top:307.5px;" width="4" height="7" viewBox="0 0 4 7"><path d="M4 0v7L0 3.5z" fill="#c4c4c4"/></svg><svg class="b" style="left:48.5px;top:307.5px;" width="4" height="7" viewBox="0 0 4 7"><path d="M0 0v7L4 3.5z" fill="#c4c4c4"/></svg><div class="b" style="left:88px;top:298px;width:57px;height:22.5px;background:#fff;box-shadow:0 0 0 0.6px #cfcfcf;"></div><div class="b" style="left:88px;top:318.7px;width:57px;height:2.0px;background:#217346;"></div><span class="t" style='left:98.08px;top:302.30px;font-size:11.5px;line-height:16px;color:#2a6a48;font-weight:700;letter-spacing:-0.236px;'>Sheet1</span><svg class="b" style="left:173.5px;top:303px;" width="16" height="16" viewBox="0 0 16 16"><circle cx="8" cy="8" r="6.6" fill="none" stroke="#666" stroke-width="1.1"/><path d="M8 4.5v7M4.5 8h7" stroke="#666" stroke-width="1.1"/></svg><div class="b" style="left:720.5px;top:305.5px;width:1.5px;height:1.5px;background:#b5b5b5;"></div><div class="b" style="left:720.5px;top:309.5px;width:1.5px;height:1.5px;background:#b5b5b5;"></div><div class="b" style="left:720.5px;top:313.5px;width:1.5px;height:1.5px;background:#b5b5b5;"></div><div class="b" style="left:735.5px;top:304.8px;width:12.5px;height:13.399999999999977px;background:#fff;border:1px solid #9b9b9b;box-sizing:border-box;"></div><svg class="b" style="left:740px;top:308px;" width="4" height="7" viewBox="0 0 4 7"><path d="M4 0v7L0 3.5z" fill="#222"/></svg><div class="b" style="left:747.5px;top:304.8px;width:398.5px;height:13.399999999999977px;background:#fff;border:1px solid #9b9b9b;box-sizing:border-box;"></div><div class="b" style="left:1170.7px;top:304.8px;width:12.299999999999955px;height:13.399999999999977px;background:#fff;border:1px solid #9b9b9b;box-sizing:border-box;"></div><svg class="b" style="left:1175.3px;top:308px;" width="4" height="7" viewBox="0 0 4 7"><path d="M0 0v7L4 3.5z" fill="#222"/></svg><div class="b" style="left:0px;top:323.5px;width:1200px;height:1.0px;background:#cfcfcf;"></div></div><div class="b" style="left:0px;top:324.5px;width:1200px;height:21.0px;background:#f3f3f3;"></div><span class="t" style='left:6.02px;top:327.50px;font-size:11.3px;line-height:16px;color:#333;letter-spacing:-0.750px;'>Ready</span><svg class="b" style="left:50px;top:328px;" width="15" height="14" viewBox="0 0 15 14"><path d="M6.2 1.2a5.2 5.2 0 1 0 5.4 6" fill="none" stroke="#444" stroke-width="1.1" stroke-dasharray="2.2 1.3"/><path d="M6.3 3v4.3h3" fill="none" stroke="#444" stroke-width="1"/><path d="M7.5 7.5l6 6M13.5 7.5l-6 6" stroke="#222" stroke-width="1.5"/></svg><span class="t" style='left:66.24px;top:327.50px;font-size:11.3px;line-height:16px;color:#333;letter-spacing:-0.525px;'>Accessibility: Investigate</span><div class="b" style="left:928px;top:325px;width:35.5px;height:20.5px;background:#c8c8c8;"></div><svg class="b" style="left:939.5px;top:329px;" width="12" height="12" viewBox="0 0 12 12"><rect x="0.5" y="0.5" width="11" height="11" fill="none" stroke="#555"/><path d="M4.2 0.5v11M7.8 0.5v11M0.5 4.2h11M0.5 7.8h11" stroke="#555"/></svg><svg class="b" style="left:975.5px;top:329px;" width="12" height="12" viewBox="0 0 12 12"><rect x="0.5" y="0.5" width="11" height="11" fill="none" stroke="#555"/><rect x="3.5" y="3.5" width="5" height="6" fill="none" stroke="#555" stroke-width="0.9"/><path d="M4.5 5.5h3M4.5 7.5h3" stroke="#555" stroke-width="0.7"/></svg><svg class="b" style="left:1010.5px;top:329px;" width="12" height="12" viewBox="0 0 12 12"><rect x="0.5" y="0.5" width="11" height="11" fill="none" stroke="#555"/><path d="M4.5 0.5v6.5h7M7.5 0.5v6.5" fill="none" stroke="#555"/></svg><div class="b" style="left:1039px;top:334.3px;width:6px;height:1.099999999999966px;background:#555;"></div><div class="b" style="left:1051px;top:334.4px;width:87px;height:0.9000000000000341px;background:#777;"></div><div class="b" style="left:1093.2px;top:329.6px;width:3.599999999999909px;height:10.599999999999966px;background:#444;"></div><div class="b" style="left:1143px;top:334.3px;width:7px;height:1.099999999999966px;background:#555;"></div><div class="b" style="left:1146px;top:331.3px;width:1.099999999999909px;height:7.099999999999966px;background:#555;"></div><span class="t" style='left:1160.02px;top:327.10px;font-size:11.3px;line-height:16px;color:#333;letter-spacing:-0.750px;'>100%</span><span class="t" style='left:557.19px;top:141.40px;font-size:21.8px;line-height:31px;color:#b9272d;font-weight:700;'>3</span></div><div class="w" style="top:345.5px;height:329.5px;background:#e6e6e6"><div class="b" style="left:0;top:1.5px;width:1200px;height:345.5px"><div class="b" style="left:0px;top:-1.5px;width:1200px;height:1.5px;background:#217346;"></div><div class="b" style="left:0px;top:0px;width:1200px;height:61px;background:#217346;"></div><svg class="b" style="left:19px;top:9px;" width="13.4" height="14.2" viewBox="0 0 13.4 14.2"><path d="M1 1h11.3v12.1h-11.3z" fill="none" stroke="#f4faf6" stroke-width="1.9"/><path d="M3.4 1.5v3.6h6.4v-3.6" fill="none" stroke="#f4faf6" stroke-width="1.3"/><rect x="3.2" y="8.6" width="6.9" height="5" fill="#f4faf6"/><rect x="5.6" y="10.6" width="1.7" height="2.6" fill="#217346"/></svg><svg class="b" style="left:44px;top:8.5px;" width="14.4" height="14.4" viewBox="0 0 14.4 14.4"><g><path d="M2 5H9a4 4 0 0 1 0 8H7.3" fill="none" stroke="#fff" stroke-width="2.1"/><path d="M5.7 1.2L1.8 5l3.9 3.8" fill="none" stroke="#fff" stroke-width="2.1" stroke-linejoin="miter"/></g></svg><svg class="b" style="left:63.7px;top:13.8px;" width="5" height="3.5" viewBox="0 0 5 3.5"><path d="M0.5 0.7L2.5 2.7L4.5 0.7" fill="none" stroke="#9cc7ae" stroke-width="1.2"/></svg><svg class="b" style="left:78.6px;top:8.5px;" width="14.4" height="14.4" viewBox="0 0 14.4 14.4"><g transform="translate(14.4,0) scale(-1,1)"><path d="M2 5H9a4 4 0 0 1 0 8H7.3" fill="none" stroke="#57987a" stroke-width="2.1"/><path d="M5.7 1.2L1.8 5l3.9 3.8" fill="none" stroke="#57987a" stroke-width="2.1" stroke-linejoin="miter"/></g></svg><svg class="b" style="left:97.7px;top:13.8px;" width="5" height="3.5" viewBox="0 0 5 3.5"><path d="M0.5 0.7L2.5 2.7L4.5 0.7" fill="none" stroke="#4c8f6d" stroke-width="1.2"/></svg><svg class="b" style="left:115.5px;top:12px;" width="7" height="8" viewBox="0 0 7 8"><rect x="0.5" y="0" width="6" height="1.5" fill="#fff"/><path d="M0.5 3.5h6L3.5 7z" fill="#fff"/></svg><span class="t" style='left:572.19px;top:8.40px;font-size:11.5px;line-height:16px;color:#c3dbcd;letter-spacing:-0.625px;-webkit-text-stroke:0;'>HS2</span><span class="t" style='left:598.00px;top:8.40px;font-size:11.5px;line-height:16px;color:#c3dbcd;-webkit-text-stroke:0;'>-</span><span class="t" style='left:605.19px;top:8.40px;font-size:11.5px;line-height:16px;color:#c3dbcd;letter-spacing:-0.625px;-webkit-text-stroke:0;'>Excel</span><div class="b" style="left:980px;top:7px;width:51px;height:18px;background:#a6d0b8;"></div><span class="t" style='left:989.31px;top:7.90px;font-size:11.5px;line-height:16px;color:#2a6a47;letter-spacing:-0.382px;'>Sign in</span><svg class="b" style="left:1053.5px;top:9.5px;" width="12" height="10" viewBox="0 0 12 10"><rect x="0.6" y="0.6" width="10.8" height="8.8" fill="none" stroke="#96caad" stroke-width="1.2"/><rect x="0.6" y="0.6" width="10.8" height="2.4" fill="#96caad"/><path d="M6 8.4V4.4M4.2 6L6 4.2L7.8 6" fill="none" stroke="#96caad" stroke-width="1.1"/></svg><div class="b" style="left:1096px;top:13.3px;width:9px;height:1.1999999999999993px;background:#96caad;"></div><div class="b" style="left:1137px;top:10px;width:8.5px;height:8.8px;border:1.2px solid #96caad;box-sizing:border-box;"></div><svg class="b" style="left:1177px;top:9.5px;" width="10" height="10" viewBox="0 0 10 10"><path d="M0.5 0.5l9 9M9.5 0.5l-9 9" stroke="#96caad" stroke-width="1.2"/></svg><span class="t" style='left:17.43px;top:38.40px;font-size:11.5px;line-height:16px;color:#fff;letter-spacing:-0.133px;'>File</span><span class="t" style='left:64.29px;top:38.40px;font-size:11.5px;line-height:16px;color:#fff;letter-spacing:-0.422px;'>Home</span><span class="t" style='left:116.35px;top:38.40px;font-size:11.5px;line-height:16px;color:#fff;letter-spacing:-0.294px;'>Insert</span><span class="t" style='left:165.25px;top:38.40px;font-size:11.5px;line-height:16px;color:#fff;letter-spacing:-0.509px;'>Page Layout</span><span class="t" style='left:246.32px;top:38.40px;font-size:11.5px;line-height:16px;color:#fff;letter-spacing:-0.367px;'>Formulas</span><span class="t" style='left:313.21px;top:38.40px;font-size:11.5px;line-height:16px;color:#fff;letter-spacing:-0.574px;'>Data</span><span class="t" style='left:358.19px;top:38.40px;font-size:11.5px;line-height:16px;color:#fff;letter-spacing:-0.620px;'>Review</span><div class="b" style="left:404.5px;top:32px;width:44.5px;height:29px;background:#f3f3f3;"></div><span class="t" style='left:414.55px;top:38.40px;font-size:11.5px;line-height:16px;color:#35604a;letter-spacing:-0.505px;'>View</span><span class="t" style='left:460.86px;top:38.40px;font-size:11.5px;line-height:16px;color:#fff;letter-spacing:-0.289px;'>Help</span><svg class="b" style="left:508px;top:39px;" width="12" height="17" viewBox="0 0 12 17"><path d="M6 1a4.6 4.6 0 0 1 2.6 8.4c-0.6 0.5-0.8 1.2-0.8 2.1h-3.6c0-0.9-0.2-1.6-0.8-2.1A4.6 4.6 0 0 1 6 1z" fill="none" stroke="#fff" stroke-width="1.2"/><path d="M4.3 13.3h3.4M4.8 15.3h2.4" stroke="#fff" stroke-width="1.1"/></svg><span class="t" style='left:531.33px;top:38.40px;font-size:11.5px;line-height:16px;color:#fff;letter-spacing:-0.349px;'>Tell me what you want to do</span><svg class="b" style="left:1174px;top:39px;" width="16" height="15" viewBox="0 0 16 15"><path d="M0.8 0.8h13.4v9.4h-7.4l-3.4 3.4v-3.4h-2.6z" fill="none" stroke="#cdebd9" stroke-width="1.3"/></svg><div class="b" style="left:0px;top:61px;width:1200px;height:88.5px;background:#f3f3f3;"></div><div class="b" style="left:0px;top:149px;width:1200px;height:1px;background:#dadada;"></div><div class="b" style="left:7px;top:64px;width:39.5px;height:66px;background:#c6c6c6;border:1px solid #a3a3a3;box-sizing:border-box;"></div><svg class="b" style="left:13px;top:69.2px;" width="27" height="24.5" viewBox="0 0 27 24.5"><rect x="0.5" y="0.5" width="26" height="23.5" fill="#fff" stroke="#5c5c5c" stroke-width="1.1"/><path d="M5.7 0.5v23.5" stroke="#6c6c6c" stroke-width="1"/><path d="M10.9 0.5v23.5" stroke="#6c6c6c" stroke-width="1"/><path d="M16.1 0.5v23.5" stroke="#6c6c6c" stroke-width="1"/><path d="M21.3 0.5v23.5" stroke="#6c6c6c" stroke-width="1"/><path d="M0.5 3.9h26" stroke="#6c6c6c" stroke-width="0.9"/><path d="M0.5 7.2h26" stroke="#6c6c6c" stroke-width="0.9"/><path d="M0.5 10.6h26" stroke="#6c6c6c" stroke-width="0.9"/><path d="M0.5 13.9h26" stroke="#6c6c6c" stroke-width="0.9"/><path d="M0.5 17.3h26" stroke="#6c6c6c" stroke-width="0.9"/><path d="M0.5 20.7h26" stroke="#6c6c6c" stroke-width="0.9"/></svg><svg class="b" style="left:61.3px;top:69.2px;" width="25.5" height="24.5" viewBox="0 0 25.5 24.5"><rect x="0.5" y="0.5" width="24.5" height="23.5" fill="#fff" stroke="#8a8a8a"/><path d="M5.4 0.5v23.5" stroke="#aebccd" stroke-width="1"/><path d="M10.3 0.5v23.5" stroke="#aebccd" stroke-width="1"/><path d="M15.2 0.5v23.5" stroke="#aebccd" stroke-width="1"/><path d="M20.1 0.5v23.5" stroke="#aebccd" stroke-width="1"/><path d="M0.5 3.9h24.5" stroke="#aebccd" stroke-width="0.9"/><path d="M0.5 7.2h24.5" stroke="#aebccd" stroke-width="0.9"/><path d="M0.5 10.6h24.5" stroke="#aebccd" stroke-width="0.9"/><path d="M0.5 13.9h24.5" stroke="#aebccd" stroke-width="0.9"/><path d="M0.5 17.3h24.5" stroke="#aebccd" stroke-width="0.9"/><path d="M0.5 20.7h24.5" stroke="#aebccd" stroke-width="0.9"/><path d="M14.6 0.5v23.5" stroke="#777" stroke-width="1.2"/><path d="M0.5 18.3h24.5" stroke="#666" stroke-width="1" stroke-dasharray="1.6 1"/></svg><svg class="b" style="left:111.2px;top:68.5px;" width="18.5" height="27" viewBox="0 0 18.5 27"><path d="M0.6 0.6h11l6.2 6.2v19.3h-17.2z" fill="#fff" stroke="#777" stroke-width="1.1"/><path d="M11.6 0.6v6.2h6.2" fill="none" stroke="#777" stroke-width="1.1"/><rect x="3" y="9.3" width="12.6" height="13.6" fill="#fff" stroke="#9a9a9a" stroke-width="0.9"/><path d="M3 12.0h12.6" stroke="#9a9a9a" stroke-width="0.9"/><path d="M3 14.7h12.6" stroke="#9a9a9a" stroke-width="0.9"/><path d="M3 17.5h12.6" stroke="#9a9a9a" stroke-width="0.9"/><path d="M3 20.2h12.6" stroke="#9a9a9a" stroke-width="0.9"/><path d="M6.6 9.3v13.6" stroke="#9a9a9a" stroke-width="0.9"/></svg><svg class="b" style="left:147.5px;top:68.5px;" width="26" height="27" viewBox="0 0 26 27"><path d="M4 1.8h17M4 0.5v2.6M21 0.5v2.6" stroke="#777" stroke-width="1" fill="none"/><path d="M1 5v16.5M-0.2 5h2.6M-0.2 21.5h2.6" stroke="#777" stroke-width="1" fill="none"/><path d="M24.2 1.8v23.3h-15.5" stroke="#777" stroke-width="1.1" fill="none"/><rect x="4.2" y="5" width="16.6" height="16.5" fill="#fff" stroke="#666" stroke-width="1.1"/><rect x="7" y="6.6" width="11.2" height="2.6" fill="#a9c0e0"/></svg><span class="t" style='left:8.37px;top:99.50px;font-size:11.5px;line-height:16px;color:#262626;letter-spacing:-0.260px;'>Normal</span><span class="t" style='left:47.27px;top:99.50px;font-size:11.5px;line-height:16px;color:#262626;letter-spacing:-0.750px;'>Page Break</span><span class="t" style='left:55.26px;top:114.70px;font-size:11.5px;line-height:16px;color:#262626;letter-spacing:-0.487px;'>Preview</span><span class="t" style='left:108.14px;top:99.50px;font-size:11.5px;line-height:16px;color:#262626;letter-spacing:-0.715px;'>Page</span><span class="t" style='left:103.86px;top:114.70px;font-size:11.5px;line-height:16px;color:#262626;letter-spacing:-0.289px;'>Layout</span><span class="t" style='left:140.31px;top:99.50px;font-size:11.5px;line-height:16px;color:#262626;letter-spacing:-0.387px;'>Custom</span><span class="t" style='left:145.23px;top:114.70px;font-size:11.5px;line-height:16px;color:#262626;letter-spacing:-0.534px;'>Views</span><span class="t" style='left:53.93px;top:132.70px;font-size:11.5px;line-height:16px;color:#262626;letter-spacing:-0.531px;'>Workbook Views</span><div class="b" style="left:186.5px;top:66px;width:1.0px;height:79px;background:#c8c8c8;"></div><svg class="b" style="left:197px;top:75.4px;" width="12" height="12" viewBox="0 0 12 12"><rect x="0.5" y="0.5" width="11" height="11" fill="#ececec" stroke="#bdbdbd"/><path d="M2.6 6.2l2.4 2.5l4.6-5.6" fill="none" stroke="#c2c2c2" stroke-width="1.1"/></svg><span class="t" style='left:212.70px;top:74.90px;font-size:11.5px;line-height:16px;color:#a8a8a8;letter-spacing:-0.597px;'>Ruler</span><svg class="b" style="left:197px;top:105px;" width="12" height="12" viewBox="0 0 12 12"><rect x="0.5" y="0.5" width="11" height="11" fill="#fff" stroke="#7d7d7d"/><path d="M2.6 6.2l2.4 2.5l4.6-5.6" fill="none" stroke="#5a5a5a" stroke-width="1.1"/></svg><span class="t" style='left:212.27px;top:103.70px;font-size:11.5px;line-height:16px;color:#262626;letter-spacing:-0.455px;'>Gridlines</span><svg class="b" style="left:262px;top:75.4px;" width="12" height="12" viewBox="0 0 12 12"><rect x="0.5" y="0.5" width="11" height="11" fill="#fff" stroke="#7d7d7d"/><path d="M2.6 6.2l2.4 2.5l4.6-5.6" fill="none" stroke="#5a5a5a" stroke-width="1.1"/></svg><span class="t" style='left:277.71px;top:74.90px;font-size:11.5px;line-height:16px;color:#262626;letter-spacing:-0.571px;'>Formula Bar</span><svg class="b" style="left:262px;top:105px;" width="12" height="12" viewBox="0 0 12 12"><rect x="0.5" y="0.5" width="11" height="11" fill="#fff" stroke="#7d7d7d"/><path d="M2.6 6.2l2.4 2.5l4.6-5.6" fill="none" stroke="#5a5a5a" stroke-width="1.1"/></svg><span class="t" style='left:277.28px;top:103.70px;font-size:11.5px;line-height:16px;color:#262626;letter-spacing:-0.449px;'>Headings</span><span class="t" style='left:253.58px;top:132.70px;font-size:11.5px;line-height:16px;color:#262626;letter-spacing:-0.645px;'>Show</span><div class="b" style="left:346.7px;top:66px;width:1.0px;height:79px;background:#c8c8c8;"></div><svg class="b" style="left:360px;top:68px;" width="26" height="27" viewBox="0 0 26 27"><circle cx="9.9" cy="9.8" r="8.1" fill="#f6f6f6" stroke="#777" stroke-width="2.1"/><path d="M16 16l6.6 8.2" stroke="#777" stroke-width="3.2" stroke-linecap="round"/></svg><span class="t" style='left:358.45px;top:99.70px;font-size:11.5px;line-height:16px;color:#262626;letter-spacing:-0.102px;'>Zoom</span><svg class="b" style="left:398px;top:68px;" width="25" height="29" viewBox="0 0 25 29"><path d="M0.6 0.5h11l6 6v18.8h-17z" fill="#fff" stroke="#9a9a9a"/><path d="M11.6 0.5v6h6" fill="none" stroke="#9a9a9a"/><path d="M23.4 0.5v20" stroke="#b9c6d8" stroke-width="1.1" stroke-dasharray="1.5 1.5"/><path d="M14 0.5h9" stroke="#b9c6d8" stroke-width="1" stroke-dasharray="1.5 1.5"/><path d="M12.6 12.7h9.4M17.8 8.6l4.2 4.1l-4.2 4.1" fill="none" stroke="#3f74b5" stroke-width="1.7"/><rect x="11" y="21.4" width="12.8" height="7.4" fill="#4a7dbd"/><text x="17.4" y="27.6" font-size="6.2" font-family="Liberation Sans, sans-serif" font-weight="700" fill="#fff" text-anchor="middle">100</text></svg><span class="t" style='left:396.91px;top:99.70px;font-size:11.5px;line-height:16px;color:#262626;letter-spacing:-0.750px;'>100%</span><svg class="b" style="left:439.5px;top:69.5px;" width="28" height="27" viewBox="0 0 28 27"><rect x="0.5" y="0.5" width="24" height="23" fill="#fff" stroke="#8a8a8a"/><path d="M6.5 0.5v23" stroke="#a8a8a8"/><path d="M12.5 0.5v23" stroke="#a8a8a8"/><path d="M18.5 0.5v23" stroke="#a8a8a8"/><path d="M0.5 6.2h24" stroke="#a8a8a8"/><path d="M0.5 12.0h24" stroke="#a8a8a8"/><path d="M0.5 17.8h24" stroke="#a8a8a8"/><circle cx="14" cy="13.5" r="6.6" fill="#eef2f6" stroke="#777" stroke-width="1.8"/><path d="M10.3 14.8a3.7 3.4 0 0 1 7.4 0z" fill="#a9b9c9"/><path d="M19 18.7l5.6 6" stroke="#777" stroke-width="3" stroke-linecap="round"/></svg><span class="t" style='left:430.49px;top:99.70px;font-size:11.5px;line-height:16px;color:#262626;letter-spacing:-0.027px;'>Zoom to</span><span class="t" style='left:429.32px;top:114.70px;font-size:11.5px;line-height:16px;color:#262626;letter-spacing:-0.368px;'>Selection</span><span class="t" style='left:400.20px;top:132.70px;font-size:11.5px;line-height:16px;color:#262626;letter-spacing:-0.602px;'>Zoom</span><div class="b" style="left:481.2px;top:66px;width:1.0px;height:79px;background:#c8c8c8;"></div><svg class="b" style="left:498px;top:67.5px;" width="25" height="30" viewBox="0 0 25 30"><rect x="8.8" y="0.5" width="15" height="12.4" fill="#fff" stroke="#8a8a8a"/><rect x="8.3" y="0" width="16" height="3" fill="#777"/><rect x="0.9" y="6.5" width="14.6" height="12" fill="#fff" stroke="#8a8a8a"/><rect x="0.4" y="6" width="15.6" height="3" fill="#777"/><rect x="9.5" y="16.8" width="14.7" height="12" fill="#fff" stroke="#8a8a8a"/><rect x="9" y="16.3" width="15.7" height="3.2" fill="#3f6fa8"/></svg><span class="t" style='left:499.16px;top:99.70px;font-size:11.5px;line-height:16px;color:#262626;letter-spacing:-0.672px;'>New</span><span class="t" style='left:490.42px;top:114.70px;font-size:11.5px;line-height:16px;color:#262626;letter-spacing:-0.151px;'>Window</span><svg class="b" style="left:542px;top:67.6px;" width="21.2" height="27.2" viewBox="0 0 21.2 27.2"><rect x="0.6" y="0.5" width="20" height="26.2" fill="#fff" stroke="#8a8a8a"/><rect x="0.1" y="0" width="21" height="4.5" fill="#41709f"/><rect x="0.1" y="13.4" width="21" height="4.3" fill="#41709f"/></svg><span class="t" style='left:534.26px;top:99.70px;font-size:11.5px;line-height:16px;color:#262626;letter-spacing:-0.489px;'>Arrange</span><span class="t" style='left:545.54px;top:114.70px;font-size:11.5px;line-height:16px;color:#262626;letter-spacing:0.073px;'>All</span><svg class="b" style="left:582px;top:69.4px;" width="24.5" height="24.5" viewBox="0 0 24.5 24.5"><rect x="0.5" y="0.5" width="23.5" height="23.5" fill="#fff" stroke="#8a8a8a"/><path d="M0.5 5.6h8M0.5 5.6v-5h23.5v5" fill="#eef2f7" stroke="none"/><path d="M8.4 0.5v23.5" stroke="#8f8f8f"/><path d="M16.3 0.5v23.5" stroke="#8f8f8f"/><path d="M0.5 5.2h23.5" stroke="#8f8f8f"/><path d="M0.5 9.9h23.5" stroke="#8f8f8f"/><path d="M0.5 14.6h23.5" stroke="#8f8f8f"/><path d="M0.5 19.3h23.5" stroke="#8f8f8f"/><rect x="8.6" y="5.4" width="7.4" height="4.6" fill="#41709f"/><path d="M0.8 5l7.4-4.2M0.8 9.7l7.4-4.3M0.8 14.4l7.4-4.3M0.8 19.1l7.4-4.3M8.8 5l7-4.2M16.8 5l7-4.2" stroke="#a9bdd6" stroke-width="0.9"/></svg><span class="t" style='left:578.28px;top:99.70px;font-size:11.5px;line-height:16px;color:#262626;letter-spacing:-0.750px;'>Freeze</span><span class="t" style='left:574.15px;top:114.70px;font-size:11.5px;line-height:16px;color:#262626;letter-spacing:-0.750px;'>Panes</span><svg class="b" style="left:606.3px;top:120.2px;" width="5" height="3.5" viewBox="0 0 5 3.5"><path d="M0.5 0.7L2.5 2.7L4.5 0.7" fill="none" stroke="#444" stroke-width="1"/></svg><svg class="b" style="left:617.2px;top:68.5px;" width="14" height="11.4" viewBox="0 0 14 11.4"><rect x="0.5" y="0.5" width="13" height="10.4" fill="#fff" stroke="#777"/><rect x="0" y="0" width="14" height="2.8" fill="#41709f"/><path d="M1.5 6.7h11" stroke="#666" stroke-dasharray="1 1"/></svg><span class="t" style='left:633.91px;top:66.70px;font-size:11.5px;line-height:16px;color:#262626;letter-spacing:-0.175px;'>Split</span><svg class="b" style="left:617.2px;top:89.5px;" width="14" height="14" viewBox="0 0 14 14"><rect x="0.5" y="0.5" width="13" height="13" fill="#fff" stroke="#666" stroke-dasharray="1 1"/><rect x="0" y="0" width="14" height="2.8" fill="#41709f"/></svg><span class="t" style='left:633.92px;top:88.70px;font-size:11.5px;line-height:16px;color:#262626;letter-spacing:-0.164px;'>Hide</span><svg class="b" style="left:617.2px;top:112px;" width="14" height="12.5" viewBox="0 0 14 12.5"><rect x="0.5" y="0.5" width="13" height="11.5" fill="#f7f7f7" stroke="#c4c4c4"/><rect x="0" y="0" width="14" height="2.2" fill="#c9c9c9"/></svg><span class="t" style='left:633.88px;top:110.70px;font-size:11.5px;line-height:16px;color:#a8a8a8;letter-spacing:-0.242px;'>Unhide</span><div class="b" style="left:677px;top:72px;width:1px;height:50px;background:#dcdcdc;"></div><div class="b" style="left:682px;top:64.2px;width:105.20000000000005px;height:21.599999999999994px;background:#c6c6c6;border:1px solid #989898;box-sizing:border-box;"></div><div class="b" style="left:682px;top:86.2px;width:128.79999999999995px;height:21.599999999999994px;background:#c6c6c6;border:1px solid #989898;box-sizing:border-box;"></div><svg class="b" style="left:684.4px;top:68.6px;" width="16" height="16" viewBox="0 0 16 16"><path d="M0.6 2h5.6v8h-5.6zM7.6 2h5.6v8h-5.6z" fill="#fff" stroke="#4a4a4a" stroke-width="1"/><path d="M4.3 0.6v3.4M11.3 0.6v3.4" stroke="#4a4a4a" stroke-width="1"/><path d="M4.3 0.9h1.9v1.1M11.3 0.9h1.9v1.1" fill="none" stroke="#4a4a4a" stroke-width="0.9"/></svg><span class="t" style='left:700.18px;top:66.70px;font-size:11.5px;line-height:16px;color:#262626;letter-spacing:-0.646px;'>View Side by Side</span><svg class="b" style="left:684.4px;top:88px;" width="16" height="16" viewBox="0 0 16 16"><path d="M0.6 3.2h4.6v8.6h-4.6zM5.8 3.2h4.8v8.6h-4.8z" fill="#fff" stroke="#4a4a4a" stroke-width="1"/><path d="M1.8 6h2M1.8 8.4h2M7.3 6h2M7.3 8.4h2" stroke="#4a4a4a" stroke-width="0.8"/><path d="M12.7 1v14" stroke="#5b7fa8" stroke-width="1"/><path d="M11.3 2.6l1.4-1.8l1.4 1.8M11.3 13.4l1.4 1.8l1.4-1.8" fill="none" stroke="#5b7fa8" stroke-width="0.9"/></svg><span class="t" style='left:700.26px;top:88.70px;font-size:11.5px;line-height:16px;color:#262626;letter-spacing:-0.472px;'>Synchronous Scrolling</span><svg class="b" style="left:684.4px;top:113.2px;" width="16" height="16" viewBox="0 0 16 16"><path d="M0.6 1.2h6v8.6h-6zM7.4 1.2h6v8.6h-6z" fill="#fff" stroke="#4a4a4a" stroke-width="1"/><path d="M1.8 5.5h3.6M8.6 5.5h3.6M3.6 3.7v3.6M10.4 3.7v3.6" fill="none" stroke="#4a4a4a" stroke-width="0.9"/></svg><span class="t" style='left:700.24px;top:110.70px;font-size:11.5px;line-height:16px;color:#262626;letter-spacing:-0.512px;'>Reset Window Position</span><div class="b" style="left:817px;top:72px;width:1px;height:50px;background:#dcdcdc;"></div><svg class="b" style="left:836px;top:68.5px;" width="27" height="24" viewBox="0 0 27 24"><rect x="0.5" y="0.5" width="11" height="9" fill="#fff" stroke="#8a8a8a"/><rect x="0" y="0" width="12" height="2.4" fill="#8a8a8a"/><rect x="14.5" y="0.5" width="11" height="9" fill="#fff" stroke="#8a8a8a"/><rect x="14" y="0" width="12" height="2.4" fill="#8a8a8a"/><rect x="0.5" y="13.5" width="11" height="9" fill="#fff" stroke="#8a8a8a"/><rect x="0" y="13" width="12" height="2.4" fill="#8a8a8a"/><rect x="9.5" y="7.5" width="13" height="11" fill="#fff" stroke="#6f6f6f"/><rect x="9" y="7" width="14" height="2.8" fill="#4a77a8"/></svg><span class="t" style='left:834.26px;top:99.70px;font-size:11.5px;line-height:16px;color:#262626;letter-spacing:-0.479px;'>Switch</span><span class="t" style='left:822.38px;top:114.70px;font-size:11.5px;line-height:16px;color:#262626;letter-spacing:-0.237px;'>Windows</span><svg class="b" style="left:870.5px;top:120.4px;" width="5" height="3.5" viewBox="0 0 5 3.5"><path d="M0.5 0.7L2.5 2.7L4.5 0.7" fill="none" stroke="#444" stroke-width="1"/></svg><span class="t" style='left:663.88px;top:132.70px;font-size:11.5px;line-height:16px;color:#262626;letter-spacing:-0.234px;'>Window</span><div class="b" style="left:885.3px;top:66px;width:1.0px;height:79px;background:#c8c8c8;"></div><svg class="b" style="left:899px;top:68px;" width="28" height="27" viewBox="0 0 28 27"><rect x="0.5" y="0.5" width="21" height="20" fill="#fff" stroke="#8a8a8a"/><rect x="0" y="0" width="22" height="3.6" fill="#6f6f6f"/><path d="M2.5 7.0h17" stroke="#a8a8a8"/><path d="M2.5 10.4h17" stroke="#a8a8a8"/><path d="M2.5 13.8h17" stroke="#a8a8a8"/><path d="M2.5 17.2h17" stroke="#a8a8a8"/><path d="M7.5 5v14" stroke="#a8a8a8"/><path d="M16.5 13.5h9.5v2.5h-1.5v9.5h-9.5v-2.5h1.5z" fill="#fff" stroke="#d9772b" stroke-width="1.2"/><rect x="14.5" y="22.5" width="8" height="3" fill="#d9772b"/></svg><span class="t" style='left:894.32px;top:99.70px;font-size:11.5px;line-height:16px;color:#262626;letter-spacing:-0.367px;'>Macros</span><svg class="b" style="left:909.8px;top:120.4px;" width="5" height="3.5" viewBox="0 0 5 3.5"><path d="M0.5 0.7L2.5 2.7L4.5 0.7" fill="none" stroke="#444" stroke-width="1"/></svg><span class="t" style='left:895.15px;top:132.70px;font-size:11.5px;line-height:16px;color:#262626;letter-spacing:-0.701px;'>Macros</span><div class="b" style="left:938px;top:66px;width:1px;height:79px;background:#c8c8c8;"></div><svg class="b" style="left:1181.5px;top:137px;" width="14" height="8" viewBox="0 0 14 8"><path d="M1 7L7 1L13 7" fill="none" stroke="#555" stroke-width="1.2"/></svg><div class="b" style="left:4.2px;top:159px;width:89.6px;height:24.599999999999994px;background:#fff;border:1px solid #d4d4d4;box-sizing:border-box;"></div><svg class="b" style="left:81.5px;top:169.5px;" width="7" height="4" viewBox="0 0 7 4"><path d="M0 0h7L3.5 4z" fill="#666"/></svg><div class="b" style="left:106.4px;top:166.9px;width:1.5999999999999943px;height:1.5999999999999943px;background:#a6a6a6;"></div><div class="b" style="left:106.4px;top:170.8px;width:1.5999999999999943px;height:1.5999999999999943px;background:#a6a6a6;"></div><div class="b" style="left:106.4px;top:174.70000000000002px;width:1.5999999999999943px;height:1.5999999999999943px;background:#a6a6a6;"></div><div class="b" style="left:120.2px;top:159px;width:96.39999999999999px;height:24.599999999999994px;background:#fff;border:1px solid #d4d4d4;box-sizing:border-box;"></div><svg class="b" style="left:132px;top:166.5px;" width="10" height="10" viewBox="0 0 10 10"><path d="M0.8 0.8l8.4 8.4M9.2 0.8l-8.4 8.4" stroke="#c2c2c2" stroke-width="1.4"/></svg><svg class="b" style="left:163px;top:166px;" width="12" height="11" viewBox="0 0 12 11"><path d="M0.8 6l3.6 3.8L11.2 0.8" fill="none" stroke="#c2c2c2" stroke-width="1.5"/></svg><span class="t" style='left:196.20px;top:160.90px;font-size:14.5px;line-height:20px;color:#3f3f3f;font-family:"Liberation Serif", serif;font-style:italic;-webkit-text-stroke:0.45px currentColor;'>f</span><span class="t" style='left:201.00px;top:166.10px;font-size:10px;line-height:14px;color:#3f3f3f;font-family:"Liberation Serif", serif;font-style:italic;-webkit-text-stroke:0.45px currentColor;'>x</span><div class="b" style="left:220.4px;top:159px;width:976.6px;height:43px;background:#fff;border:1px solid #d0d0d0;box-sizing:border-box;"></div><svg class="b" style="left:1185.5px;top:168.5px;" width="7" height="5" viewBox="0 0 7 5"><path d="M0.5 4.2L3.5 1L6.5 4.2" fill="none" stroke="#c2c2c2" stroke-width="1.1"/></svg><div class="b" style="left:0;top:0;width:1183.5px;height:299.4px;overflow:hidden"><div class="b" style="left:22px;top:231px;width:1161px;height:68.39999999999998px;background:#fff;"></div><svg class="b" style="left:8.8px;top:216.8px;" width="11" height="11" viewBox="0 0 11 11"><path d="M11 0v11h-11z" fill="#b7b7b7"/></svg><span class="t" style='left:47.61px;top:213.30px;font-size:11.5px;line-height:16px;color:#333;'>A</span><span class="t" style='left:126.36px;top:213.30px;font-size:11.5px;line-height:16px;color:#333;'>B</span><span class="t" style='left:204.69px;top:213.30px;font-size:11.5px;line-height:16px;color:#333;'>C</span><span class="t" style='left:260.94px;top:213.30px;font-size:11.5px;line-height:16px;color:#333;'>D</span><span class="t" style='left:317.26px;top:213.30px;font-size:11.5px;line-height:16px;color:#333;'>E</span><span class="t" style='left:373.78px;top:213.30px;font-size:11.5px;line-height:16px;color:#333;'>F</span><span class="t" style='left:429.32px;top:213.30px;font-size:11.5px;line-height:16px;color:#333;'>G</span><span class="t" style='left:485.84px;top:213.30px;font-size:11.5px;line-height:16px;color:#333;'>H</span><span class="t" style='left:544.85px;top:213.30px;font-size:11.5px;line-height:16px;color:#333;'>I</span><span class="t" style='left:600.18px;top:213.30px;font-size:11.5px;line-height:16px;color:#333;'>J</span><span class="t" style='left:655.51px;top:213.30px;font-size:11.5px;line-height:16px;color:#333;'>K</span><span class="t" style='left:712.50px;top:213.30px;font-size:11.5px;line-height:16px;color:#333;'>L</span><span class="t" style='left:767.25px;top:213.30px;font-size:11.5px;line-height:16px;color:#333;'>M</span><span class="t" style='left:824.19px;top:213.30px;font-size:11.5px;line-height:16px;color:#333;'>N</span><span class="t" style='left:880.22px;top:213.30px;font-size:11.5px;line-height:16px;color:#333;'>O</span><span class="t" style='left:937.21px;top:213.30px;font-size:11.5px;line-height:16px;color:#333;'>P</span><span class="t" style='left:992.87px;top:213.30px;font-size:11.5px;line-height:16px;color:#333;'>Q</span><span class="t" style='left:1049.54px;top:213.30px;font-size:11.5px;line-height:16px;color:#333;'>R</span><span class="t" style='left:1106.21px;top:213.30px;font-size:11.5px;line-height:16px;color:#333;'>S</span><span class="t" style='left:1162.83px;top:213.30px;font-size:11.5px;line-height:16px;color:#333;'>T</span><div class="b" style="left:21.5px;top:213.5px;width:1.0px;height:17.5px;background:#c4c4c4;"></div><div class="b" style="left:78.0px;top:213.5px;width:1.0px;height:17.5px;background:#c4c4c4;"></div><div class="b" style="left:179.0px;top:213.5px;width:1.0px;height:17.5px;background:#c4c4c4;"></div><div class="b" style="left:235.3px;top:213.5px;width:1.0px;height:17.5px;background:#c4c4c4;"></div><div class="b" style="left:291.5px;top:213.5px;width:1.0px;height:17.5px;background:#c4c4c4;"></div><div class="b" style="left:347.3px;top:213.5px;width:1.0px;height:17.5px;background:#c4c4c4;"></div><div class="b" style="left:403.9px;top:213.5px;width:1.0px;height:17.5px;background:#c4c4c4;"></div><div class="b" style="left:460.3px;top:213.5px;width:1.0px;height:17.5px;background:#c4c4c4;"></div><div class="b" style="left:516.3px;top:213.5px;width:1.0px;height:17.5px;background:#c4c4c4;"></div><div class="b" style="left:573.2px;top:213.5px;width:1.0px;height:17.5px;background:#c4c4c4;"></div><div class="b" style="left:629.5px;top:213.5px;width:1.0px;height:17.5px;background:#c4c4c4;"></div><div class="b" style="left:685.8px;top:213.5px;width:1.0px;height:17.5px;background:#c4c4c4;"></div><div class="b" style="left:742.2px;top:213.5px;width:1.0px;height:17.5px;background:#c4c4c4;"></div><div class="b" style="left:798.5px;top:213.5px;width:1.0px;height:17.5px;background:#c4c4c4;"></div><div class="b" style="left:854.8px;top:213.5px;width:1.0px;height:17.5px;background:#c4c4c4;"></div><div class="b" style="left:911.2px;top:213.5px;width:1.0px;height:17.5px;background:#c4c4c4;"></div><div class="b" style="left:967.5px;top:213.5px;width:1.0px;height:17.5px;background:#c4c4c4;"></div><div class="b" style="left:1023.8px;top:213.5px;width:1.0px;height:17.5px;background:#c4c4c4;"></div><div class="b" style="left:1080.2px;top:213.5px;width:1.0px;height:17.5px;background:#c4c4c4;"></div><div class="b" style="left:1136.5px;top:213.5px;width:1.0px;height:17.5px;background:#c4c4c4;"></div><div class="b" style="left:1192.8px;top:213.5px;width:1.0px;height:17.5px;background:#c4c4c4;"></div><div class="b" style="left:0px;top:230.5px;width:1183px;height:1.0px;background:#a6a6a6;"></div><div class="b" style="left:573.7px;top:250.5px;width:609.3px;height:1.0px;background:#d6d6d6;"></div><div class="b" style="left:573.7px;top:270.5px;width:609.3px;height:1.0px;background:#d6d6d6;"></div><div class="b" style="left:573.7px;top:290.5px;width:609.3px;height:1.0px;background:#d6d6d6;"></div><div class="b" style="left:629.5px;top:231px;width:1.0px;height:68.39999999999998px;background:#d6d6d6;"></div><div class="b" style="left:685.8px;top:231px;width:1.0px;height:68.39999999999998px;background:#d6d6d6;"></div><div class="b" style="left:742.2px;top:231px;width:1.0px;height:68.39999999999998px;background:#d6d6d6;"></div><div class="b" style="left:798.5px;top:231px;width:1.0px;height:68.39999999999998px;background:#d6d6d6;"></div><div class="b" style="left:854.8px;top:231px;width:1.0px;height:68.39999999999998px;background:#d6d6d6;"></div><div class="b" style="left:911.2px;top:231px;width:1.0px;height:68.39999999999998px;background:#d6d6d6;"></div><div class="b" style="left:967.5px;top:231px;width:1.0px;height:68.39999999999998px;background:#d6d6d6;"></div><div class="b" style="left:1023.8px;top:231px;width:1.0px;height:68.39999999999998px;background:#d6d6d6;"></div><div class="b" style="left:1080.2px;top:231px;width:1.0px;height:68.39999999999998px;background:#d6d6d6;"></div><div class="b" style="left:1136.5px;top:231px;width:1.0px;height:68.39999999999998px;background:#d6d6d6;"></div><div class="b" style="left:1192.8px;top:231px;width:1.0px;height:68.39999999999998px;background:#d6d6d6;"></div><div class="b" style="left:0px;top:250.5px;width:22px;height:1.0px;background:#c4c4c4;"></div><div class="b" style="left:0px;top:270.5px;width:22px;height:1.0px;background:#c4c4c4;"></div><div class="b" style="left:0px;top:290.5px;width:22px;height:1.0px;background:#c4c4c4;"></div><div class="b" style="left:21.8px;top:231.5px;width:1.0999999999999979px;height:67.89999999999998px;background:#2a2a2a;"></div><div class="b" style="left:22px;top:250.9px;width:551.7px;height:1.0999999999999943px;background:#161616;"></div><div class="b" style="left:22px;top:270.9px;width:551.7px;height:1.1000000000000227px;background:#161616;"></div><div class="b" style="left:22px;top:290.9px;width:551.7px;height:1.1000000000000227px;background:#161616;"></div><div class="b" style="left:78px;top:231px;width:1.0999999999999943px;height:68.39999999999998px;background:#161616;"></div><div class="b" style="left:179px;top:231px;width:1px;height:68.39999999999998px;background:#e4e4e4;"></div><div class="b" style="left:235px;top:231px;width:1.0999999999999943px;height:68.39999999999998px;background:#161616;"></div><div class="b" style="left:291px;top:231px;width:1.1000000000000227px;height:68.39999999999998px;background:#161616;"></div><div class="b" style="left:347px;top:231px;width:1.1000000000000227px;height:68.39999999999998px;background:#161616;"></div><div class="b" style="left:404px;top:231px;width:1.1000000000000227px;height:68.39999999999998px;background:#161616;"></div><div class="b" style="left:460px;top:231px;width:1.1000000000000227px;height:68.39999999999998px;background:#161616;"></div><div class="b" style="left:516px;top:231px;width:1.1000000000000227px;height:68.39999999999998px;background:#161616;"></div><div class="b" style="left:573px;top:231px;width:1.1000000000000227px;height:68.39999999999998px;background:#161616;"></div><div class="b" style="left:1182.5px;top:231px;width:1.0px;height:68.39999999999998px;background:#bdbdbd;"></div><span class="t" style='left:7.75px;top:234.70px;font-size:11.5px;line-height:16px;color:#333;letter-spacing:-0.106px;'>4</span><span class="t" style='left:7.75px;top:254.75px;font-size:11.5px;line-height:16px;color:#333;letter-spacing:-0.106px;'>5</span><span class="t" style='left:7.75px;top:274.80px;font-size:11.5px;line-height:16px;color:#333;letter-spacing:-0.106px;'>6</span><span class="t" style='left:47.34px;top:231.75px;font-size:14.67px;line-height:21px;color:#111;font-family:"Liberation Serif", serif;'>2</span><span class="t" style='left:80.83px;top:231.75px;font-size:14.67px;line-height:21px;color:#111;font-family:"Liberation Serif", serif;letter-spacing:-0.540px;'>Trương Như</span><span class="t" style='left:181.32px;top:231.75px;font-size:14.67px;line-height:21px;color:#111;font-weight:700;font-family:"Liberation Serif", serif;letter-spacing:-0.354px;'>Hoa</span><span class="t" style='left:245.57px;top:235.99px;font-size:11px;line-height:15px;color:#111;font-family:"Liberation Serif", serif;letter-spacing:-0.266px;'>9/6/1991</span><span class="t" style='left:294.96px;top:235.99px;font-size:11px;line-height:15px;color:#111;font-family:"Liberation Serif", serif;letter-spacing:-0.288px;'>Quảng Bình</span><span class="t" style='left:47.34px;top:251.75px;font-size:14.67px;line-height:21px;color:#111;font-family:"Liberation Serif", serif;'>3</span><span class="t" style='left:80.64px;top:251.75px;font-size:14.67px;line-height:21px;color:#111;font-family:"Liberation Serif", serif;letter-spacing:-0.926px;'>Phạm Thùy</span><span class="t" style='left:181.04px;top:251.75px;font-size:14.67px;line-height:21px;color:#111;font-weight:700;font-family:"Liberation Serif", serif;letter-spacing:-0.914px;'>Linh</span><span class="t" style='left:240.32px;top:255.99px;font-size:11px;line-height:15px;color:#111;font-family:"Liberation Serif", serif;letter-spacing:-0.263px;'>10/14/1991</span><span class="t" style='left:298.35px;top:255.99px;font-size:11px;line-height:15px;color:#111;font-family:"Liberation Serif", serif;letter-spacing:-0.104px;'>Quảng Trị</span><span class="t" style='left:47.34px;top:271.75px;font-size:14.67px;line-height:21px;color:#111;font-family:"Liberation Serif", serif;'>4</span><span class="t" style='left:80.67px;top:271.75px;font-size:14.67px;line-height:21px;color:#111;font-family:"Liberation Serif", serif;letter-spacing:-0.866px;'>Nguyễn Thị</span><span class="t" style='left:181.41px;top:271.75px;font-size:14.67px;line-height:21px;color:#111;font-weight:700;font-family:"Liberation Serif", serif;letter-spacing:-0.188px;'>Ngọc</span><span class="t" style='left:242.61px;top:275.99px;font-size:11px;line-height:15px;color:#111;font-family:"Liberation Serif", serif;letter-spacing:-0.181px;'>4/26/1992</span><span class="t" style='left:47.34px;top:289.35px;font-size:14.67px;line-height:21px;color:#111;font-family:"Liberation Serif", serif;'>5</span><span class="t" style='left:80.65px;top:289.35px;font-size:14.67px;line-height:21px;color:#111;font-family:"Liberation Serif", serif;letter-spacing:-0.900px;'>Nguyễn Thị Thùy</span><span class="t" style='left:181.02px;top:289.35px;font-size:14.67px;line-height:21px;color:#111;font-weight:700;font-family:"Liberation Serif", serif;letter-spacing:-0.964px;'>Nguyệt</span><span class="t" style='left:242.61px;top:293.59px;font-size:11px;line-height:15px;color:#111;font-family:"Liberation Serif", serif;letter-spacing:-0.181px;'>5/19/1992</span><span class="t" style='left:298.59px;top:293.59px;font-size:11px;line-height:15px;color:#111;font-family:"Liberation Serif", serif;letter-spacing:-0.122px;'>Đăk - Lăk</span></div><div class="b" style="left:1183.5px;top:212px;width:16.5px;height:87.89999999999998px;background:#e6e6e6;"></div><div class="b" style="left:1186px;top:214.7px;width:12.700000000000045px;height:12.5px;background:#fff;border:1px solid #9b9b9b;box-sizing:border-box;"></div><svg class="b" style="left:1189px;top:218.7px;" width="7" height="4" viewBox="0 0 7 4"><path d="M0 4h7L3.5 0z" fill="#222"/></svg><div class="b" style="left:1186px;top:236.38px;width:12.700000000000045px;height:16.25999999999999px;background:#fff;border:1px solid #9b9b9b;box-sizing:border-box;"></div><div class="b" style="left:1186px;top:286.52px;width:12.700000000000045px;height:13.180000000000007px;background:#fff;border:1px solid #9b9b9b;box-sizing:border-box;"></div><svg class="b" style="left:1189px;top:291.21px;" width="7" height="4" viewBox="0 0 7 4"><path d="M0 0h7L3.5 4z" fill="#222"/></svg><div class="b" style="left:0;top:1.9px;width:1200px;height:0"><div class="b" style="left:0px;top:297.5px;width:1200px;height:26.5px;background:#e6e6e6;"></div><div class="b" style="left:0px;top:297px;width:1183.5px;height:1px;background:#b5b5b5;"></div><svg class="b" style="left:24.5px;top:307.5px;" width="4" height="7" viewBox="0 0 4 7"><path d="M4 0v7L0 3.5z" fill="#c4c4c4"/></svg><svg class="b" style="left:48.5px;top:307.5px;" width="4" height="7" viewBox="0 0 4 7"><path d="M0 0v7L4 3.5z" fill="#c4c4c4"/></svg><div class="b" style="left:88px;top:298px;width:57px;height:22.5px;background:#fff;box-shadow:0 0 0 0.6px #cfcfcf;"></div><div class="b" style="left:88px;top:318.7px;width:57px;height:2.0px;background:#217346;"></div><span class="t" style='left:98.08px;top:302.30px;font-size:11.5px;line-height:16px;color:#2a6a48;font-weight:700;letter-spacing:-0.236px;'>Sheet1</span><svg class="b" style="left:173.5px;top:303px;" width="16" height="16" viewBox="0 0 16 16"><circle cx="8" cy="8" r="6.6" fill="none" stroke="#666" stroke-width="1.1"/><path d="M8 4.5v7M4.5 8h7" stroke="#666" stroke-width="1.1"/></svg><div class="b" style="left:720.5px;top:305.5px;width:1.5px;height:1.5px;background:#b5b5b5;"></div><div class="b" style="left:720.5px;top:309.5px;width:1.5px;height:1.5px;background:#b5b5b5;"></div><div class="b" style="left:720.5px;top:313.5px;width:1.5px;height:1.5px;background:#b5b5b5;"></div><div class="b" style="left:735.5px;top:304.8px;width:12.5px;height:13.399999999999977px;background:#fff;border:1px solid #9b9b9b;box-sizing:border-box;"></div><svg class="b" style="left:740px;top:308px;" width="4" height="7" viewBox="0 0 4 7"><path d="M4 0v7L0 3.5z" fill="#222"/></svg><div class="b" style="left:747.5px;top:304.8px;width:398.5px;height:13.399999999999977px;background:#fff;border:1px solid #9b9b9b;box-sizing:border-box;"></div><div class="b" style="left:1170.7px;top:304.8px;width:12.299999999999955px;height:13.399999999999977px;background:#fff;border:1px solid #9b9b9b;box-sizing:border-box;"></div><svg class="b" style="left:1175.3px;top:308px;" width="4" height="7" viewBox="0 0 4 7"><path d="M0 0v7L4 3.5z" fill="#222"/></svg><div class="b" style="left:0px;top:323.5px;width:1200px;height:1.0px;background:#cfcfcf;"></div></div><div class="b" style="left:0;top:1.9px;width:1200px;height:0"><div class="b" style="left:0px;top:324.5px;width:1200px;height:21.0px;background:#f3f3f3;"></div><span class="t" style='left:6.02px;top:327.50px;font-size:11.3px;line-height:16px;color:#333;letter-spacing:-0.750px;'>Ready</span><svg class="b" style="left:50px;top:328px;" width="15" height="14" viewBox="0 0 15 14"><path d="M6.2 1.2a5.2 5.2 0 1 0 5.4 6" fill="none" stroke="#444" stroke-width="1.1" stroke-dasharray="2.2 1.3"/><path d="M6.3 3v4.3h3" fill="none" stroke="#444" stroke-width="1"/><path d="M7.5 7.5l6 6M13.5 7.5l-6 6" stroke="#222" stroke-width="1.5"/></svg><span class="t" style='left:66.24px;top:327.50px;font-size:11.3px;line-height:16px;color:#333;letter-spacing:-0.525px;'>Accessibility: Investigate</span><div class="b" style="left:928px;top:325px;width:35.5px;height:20.5px;background:#c8c8c8;"></div><svg class="b" style="left:939.5px;top:329px;" width="12" height="12" viewBox="0 0 12 12"><rect x="0.5" y="0.5" width="11" height="11" fill="none" stroke="#555"/><path d="M4.2 0.5v11M7.8 0.5v11M0.5 4.2h11M0.5 7.8h11" stroke="#555"/></svg><svg class="b" style="left:975.5px;top:329px;" width="12" height="12" viewBox="0 0 12 12"><rect x="0.5" y="0.5" width="11" height="11" fill="none" stroke="#555"/><rect x="3.5" y="3.5" width="5" height="6" fill="none" stroke="#555" stroke-width="0.9"/><path d="M4.5 5.5h3M4.5 7.5h3" stroke="#555" stroke-width="0.7"/></svg><svg class="b" style="left:1010.5px;top:329px;" width="12" height="12" viewBox="0 0 12 12"><rect x="0.5" y="0.5" width="11" height="11" fill="none" stroke="#555"/><path d="M4.5 0.5v6.5h7M7.5 0.5v6.5" fill="none" stroke="#555"/></svg><div class="b" style="left:1039px;top:334.3px;width:6px;height:1.099999999999966px;background:#555;"></div><div class="b" style="left:1051px;top:334.4px;width:87px;height:0.9000000000000341px;background:#777;"></div><div class="b" style="left:1093.2px;top:329.6px;width:3.599999999999909px;height:10.599999999999966px;background:#444;"></div><div class="b" style="left:1143px;top:334.3px;width:7px;height:1.099999999999966px;background:#555;"></div><div class="b" style="left:1146px;top:331.3px;width:1.099999999999909px;height:7.099999999999966px;background:#555;"></div><span class="t" style='left:1160.02px;top:327.10px;font-size:11.3px;line-height:16px;color:#333;letter-spacing:-0.750px;'>100%</span></div></div></div><div class="d"><div class="b" style="left:352.6px;top:362.8px;width:175.19999999999993px;height:186.2px;background:#f0f0f0;box-shadow:0 0 0 0.6px rgba(60,60,60,0.45), 0 2px 10px 1px rgba(0,0,0,0.4);"></div><div class="b" style="left:352.6px;top:362.8px;width:175.19999999999993px;height:29.19999999999999px;background:#fff;"></div><span class="t" style='left:359.27px;top:369.10px;font-size:11.5px;line-height:16px;color:#111;letter-spacing:-0.451px;'>Arrange Windows</span><span class="t" style='left:463.38px;top:367.90px;font-size:13px;line-height:18px;color:#111;letter-spacing:-0.234px;'>?</span><svg class="b" style="left:501.5px;top:372px;" width="11" height="11" viewBox="0 0 11 11"><path d="M0.7 0.7l9.6 9.6M10.3 0.7l-9.6 9.6" stroke="#222" stroke-width="1.2"/></svg><span class="t" style='left:357.22px;top:397.10px;font-size:11.5px;line-height:16px;color:#111;letter-spacing:-0.560px;'>Arrange</span><div class="b" style="left:397px;top:405.5px;width:124px;height:1.0px;background:#dcdcdc;"></div><svg class="b" style="left:365.5px;top:418.7px;" width="12" height="12" viewBox="0 0 12 12"><circle cx="6" cy="6" r="5.3" fill="#fff" stroke="#333" stroke-width="1"/></svg><span class="t" style='left:380.46px;top:416.60px;font-size:11.5px;line-height:16px;color:#111;letter-spacing:-0.480px;'><u>T</u>iled</span><svg class="b" style="left:365.5px;top:436.8px;" width="12" height="12" viewBox="0 0 12 12"><circle cx="6" cy="6" r="5.3" fill="#fff" stroke="#333" stroke-width="1"/></svg><span class="t" style='left:380.49px;top:434.70px;font-size:11.5px;line-height:16px;color:#111;letter-spacing:-0.418px;'><u>H</u>orizontal</span><svg class="b" style="left:365.5px;top:455px;" width="12" height="12" viewBox="0 0 12 12"><circle cx="6" cy="6" r="5.3" fill="#fff" stroke="#333" stroke-width="1"/><circle cx="6" cy="6" r="2.8" fill="#222"/></svg><span class="t" style='left:381.02px;top:452.90px;font-size:11.5px;line-height:16px;color:#111;letter-spacing:-0.565px;'><u>V</u>ertical</span><div class="b" style="left:379.5px;top:453.5px;width:36.0px;height:15.5px;border:1px dotted #333;box-sizing:border-box;"></div><svg class="b" style="left:365.5px;top:473.2px;" width="12" height="12" viewBox="0 0 12 12"><circle cx="6" cy="6" r="5.3" fill="#fff" stroke="#333" stroke-width="1"/></svg><span class="t" style='left:378.75px;top:471.10px;font-size:11.5px;line-height:16px;color:#111;letter-spacing:-0.750px;'><u>C</u>ascade</span><div class="b" style="left:358px;top:497px;width:11.5px;height:11.5px;background:#fff;border:1px solid #333;box-sizing:border-box;"></div><span class="t" style='left:372.47px;top:494.30px;font-size:11.5px;line-height:16px;color:#111;letter-spacing:-0.465px;'><u>W</u>indows of active workbook</span><div class="b" style="left:382px;top:520.5px;width:65px;height:20.0px;background:#e1e1e1;border:2px solid #0078d7;box-sizing:border-box;"></div><span class="t" style='left:406.06px;top:522.50px;font-size:11.5px;line-height:16px;color:#111;letter-spacing:-0.750px;'>OK</span><div class="b" style="left:456px;top:520.5px;width:64.5px;height:20.0px;background:#e1e1e1;border:1px solid #adadad;box-sizing:border-box;"></div><span class="t" style='left:472.22px;top:522.50px;font-size:11.5px;line-height:16px;color:#111;letter-spacing:-0.750px;'>Cancel</span><div class="b" style="left:358.2px;top:450.3px;width:78.0px;height:22.099999999999966px;border:2.8px solid #b9272d;box-sizing:border-box;"></div><span class="t" style='left:450.35px;top:442.10px;font-size:23px;line-height:32px;color:#b9272d;font-weight:700;'>4</span><div class="b" style="left:376.8px;top:514.8px;width:76.80000000000001px;height:32.700000000000045px;border:2.9px solid #b9272d;box-sizing:border-box;"></div><span class="t" style='left:357.82px;top:515.00px;font-size:24px;line-height:34px;color:#b9272d;font-weight:700;'>5</span></div>
</body></html>
